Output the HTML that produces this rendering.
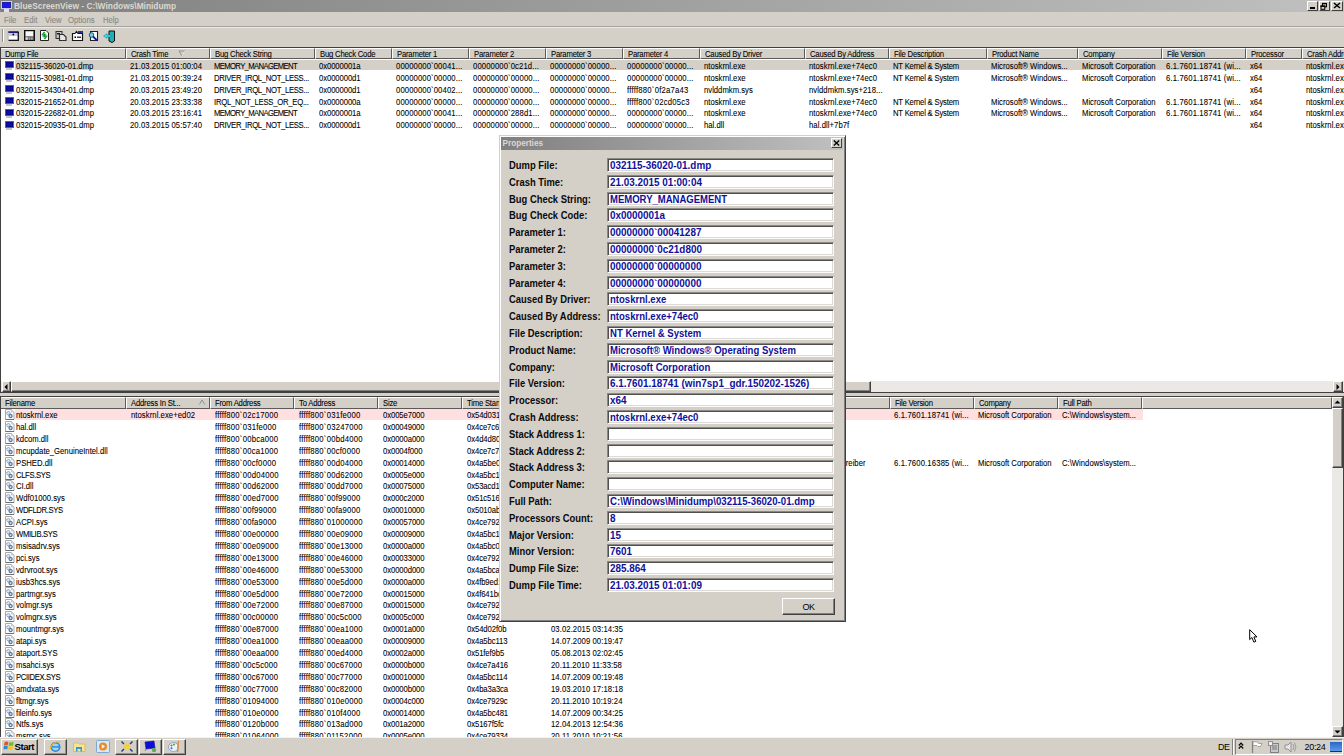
<!DOCTYPE html><html><head><meta charset="utf-8"><style>
html,body{margin:0;padding:0;}
body{width:1344px;height:756px;overflow:hidden;position:relative;background:#d4d0c8;font-family:"Liberation Sans",sans-serif;}
div{box-sizing:border-box;}
svg{display:block;}
.t{position:absolute;white-space:nowrap;font-size:8.3px;line-height:10px;color:#000;transform:scaleX(0.928);transform-origin:0 0;-webkit-text-stroke:0.08px #000;}
.n{transform:none;-webkit-text-stroke:0;}
</style></head><body>
<div style="position:absolute;left:0px;top:0px;width:1344px;height:12px;background:linear-gradient(to right,#808080,#c0c0c0);"></div>
<div style="position:absolute;left:1px;top:1px;width:11px;height:8px;background:#1818f0;border:1px solid #c8c8ff;box-shadow:inset 0 0 0 1px #2020a0;"></div>
<div style="position:absolute;left:4px;top:9px;width:5px;height:3px;background:#e0e0e0;"></div>
<div class="t" style="left:14px;top:0.8px;font-size:8.4px;font-weight:bold;color:#dcd8d0;line-height:10px;transform:none;-webkit-text-stroke:0;">BlueScreenView - C:\Windows\Minidump</div>
<div style="position:absolute;left:1307px;top:1px;width:11px;height:10px;background:#d4d0c8;border-top:1px solid #fff;border-left:1px solid #fff;border-right:1px solid #404040;border-bottom:1px solid #404040;"></div>
<div style="position:absolute;left:1319px;top:1px;width:11px;height:10px;background:#d4d0c8;border-top:1px solid #fff;border-left:1px solid #fff;border-right:1px solid #404040;border-bottom:1px solid #404040;"></div>
<div style="position:absolute;left:1331px;top:1px;width:12px;height:10px;background:#d4d0c8;border-top:1px solid #fff;border-left:1px solid #fff;border-right:1px solid #404040;border-bottom:1px solid #404040;"></div>
<div style="position:absolute;left:1310px;top:7px;width:5px;height:2px;background:#000;"></div>
<svg style="position:absolute;left:1319px;top:1px" width="11" height="10" viewBox="0 0 11 10"><path d="M3.5 5 V2.5 H7.5 V6 H6" fill="none" stroke="#000" stroke-width="1"/><path d="M3 2.6 H8" stroke="#000" stroke-width="1.4"/><rect x="2" y="5" width="3.8" height="3.3" fill="none" stroke="#000" stroke-width="1"/><path d="M1.5 5.2 H6.3" stroke="#000" stroke-width="1.4"/></svg>
<svg style="position:absolute;left:1333px;top:2px" width="8" height="7" viewBox="0 0 8 7"><path d="M1 1 L7 6 M7 1 L1 6" stroke="#000" stroke-width="1.5"/></svg>
<div class="t" style="left:4px;top:14.5px;color:#8a8884;-webkit-text-stroke:0.1px #8a8884;">File</div>
<div class="t" style="left:23.7px;top:14.5px;color:#8a8884;-webkit-text-stroke:0.1px #8a8884;">Edit</div>
<div class="t" style="left:45px;top:14.5px;color:#8a8884;-webkit-text-stroke:0.1px #8a8884;">View</div>
<div class="t" style="left:68.2px;top:14.5px;color:#8a8884;-webkit-text-stroke:0.1px #8a8884;">Options</div>
<div class="t" style="left:102.5px;top:14.5px;color:#8a8884;-webkit-text-stroke:0.1px #8a8884;">Help</div>
<div style="position:absolute;left:0px;top:26px;width:1344px;height:1px;background:#a4a29e;"></div>
<div style="position:absolute;left:0px;top:27px;width:1344px;height:1px;background:#ecebe7;"></div>
<div style="position:absolute;left:2px;top:29px;width:2px;height:13px;border-left:1px solid #909090;border-right:1px solid #fff;"></div>
<svg style="position:absolute;left:7px;top:30px" width="13" height="12" viewBox="0 0 13 12"><rect x="1" y="1" width="10.5" height="9.5" fill="#d8d8d8"/><rect x="1" y="1.2" width="10" height="1.8" fill="#1a1a80"/><rect x="1.5" y="3.2" width="9" height="2.5" fill="#c8c8d0"/><rect x="1.5" y="6" width="9" height="3.5" fill="#fff"/><circle cx="6.3" cy="4.5" r="0.9" fill="#000"/><path d="M1 1 V10" stroke="#b0b0b0" stroke-width="0.8"/><path d="M11.3 1.5 V10.4 H1.5" stroke="#151515" stroke-width="1.3" fill="none"/></svg>
<svg style="position:absolute;left:23px;top:29px" width="13" height="13" viewBox="0 0 13 13"><rect x="1.5" y="1.5" width="10" height="10" fill="#505050" stroke="#101010" stroke-width="1"/><rect x="2.6" y="2.3" width="7.6" height="5" fill="#f6f6f6"/><rect x="2.6" y="8.2" width="2.2" height="2.6" fill="#e0e0e0"/><rect x="5.5" y="8.2" width="1.6" height="2.6" fill="#a0a0a0"/><rect x="7.6" y="8.2" width="2.2" height="2.6" fill="#a0a0a0"/></svg>
<svg style="position:absolute;left:39px;top:29px" width="11" height="13" viewBox="0 0 11 13"><path d="M1.5 1.5 H7 L9.5 4 V11.5 H1.5 Z" fill="#fff" stroke="#202020" stroke-width="1"/><path d="M5.5 3 L3.5 5.5 L5 5.5 L5 8 M5.5 10 L7.5 7.5 L6 7.5 L6 5" stroke="#109010" stroke-width="1.3" fill="none"/><circle cx="5.5" cy="6.5" r="2" fill="none" stroke="#60b0b0" stroke-width="0.7"/></svg>
<svg style="position:absolute;left:55px;top:30px" width="13" height="12" viewBox="0 0 13 12"><rect x="1" y="1.5" width="6" height="7" fill="#c8c8c8" stroke="#303030" stroke-width="1"/><rect x="2" y="3" width="3" height="1.5" fill="#202020"/><path d="M4.5 4.5 H8.5 L11 7 V10.5 H4.5 Z" fill="#e8e8e8" stroke="#303030" stroke-width="1.2"/></svg>
<svg style="position:absolute;left:71px;top:30px" width="13" height="12" viewBox="0 0 13 12"><path d="M1.5 3.5 H4 L5.5 1.5 L7 3.5 H11.5 V10.5 H1.5 Z" fill="#fff" stroke="#151515" stroke-width="1.2"/><rect x="7" y="1" width="5" height="2" fill="#30308a"/><rect x="3.5" y="6.5" width="1.5" height="1.5" fill="#000"/><rect x="6" y="6.5" width="4" height="1.5" fill="#404040"/></svg>
<svg style="position:absolute;left:88px;top:30px" width="12" height="13" viewBox="0 0 12 13"><path d="M2.5 1.5 H9.5 V10.5 H2.5 Z" fill="#fff" stroke="#202020" stroke-width="1.1"/><circle cx="3.5" cy="5" r="2.3" fill="#70d0e0" stroke="#206080" stroke-width="1"/><path d="M5 6.5 L9 10.5" stroke="#1a1aa0" stroke-width="1.8"/></svg>
<svg style="position:absolute;left:103px;top:30px" width="13" height="13" viewBox="0 0 13 13"><path d="M6 1 L11.5 1 L11.5 11 L9 12.5 L6 11 Z" fill="#20b0b8" stroke="#101010" stroke-width="1"/><path d="M0.5 6 L4 3.5 V5 H8 V7 H4 V8.5 Z" fill="#40d8e8" stroke="#108090" stroke-width="0.5"/></svg>
<div style="position:absolute;left:0px;top:47px;width:1344px;height:346px;background:#fff;border-top:1px solid #404040;border-left:1px solid #404040;border-bottom:1px solid #404040;"></div>
<div style="position:absolute;left:1px;top:48px;width:1343px;height:11px;overflow:hidden;">
<div style="position:absolute;left:-1px;top:0px;width:126px;height:11px;background:#d4d0c8;border-right:1px solid #5a5a5a;border-bottom:1px solid #5a5a5a;border-left:1px solid #fff;border-top:1px solid #fff;"></div>
<div class="t" style="left:3.7px;top:1.3px;letter-spacing:-0.22px;">Dump File</div>
<div style="position:absolute;left:125px;top:0px;width:84px;height:11px;background:#d4d0c8;border-right:1px solid #5a5a5a;border-bottom:1px solid #5a5a5a;border-left:1px solid #fff;border-top:1px solid #fff;"></div>
<div class="t" style="left:129.7px;top:1.3px;letter-spacing:-0.22px;">Crash Time</div>
<div style="position:absolute;left:209px;top:0px;width:105px;height:11px;background:#d4d0c8;border-right:1px solid #5a5a5a;border-bottom:1px solid #5a5a5a;border-left:1px solid #fff;border-top:1px solid #fff;"></div>
<div class="t" style="left:213.7px;top:1.3px;letter-spacing:-0.22px;">Bug Check String</div>
<div style="position:absolute;left:314px;top:0px;width:77px;height:11px;background:#d4d0c8;border-right:1px solid #5a5a5a;border-bottom:1px solid #5a5a5a;border-left:1px solid #fff;border-top:1px solid #fff;"></div>
<div class="t" style="left:318.7px;top:1.3px;letter-spacing:-0.22px;">Bug Check Code</div>
<div style="position:absolute;left:391px;top:0px;width:77px;height:11px;background:#d4d0c8;border-right:1px solid #5a5a5a;border-bottom:1px solid #5a5a5a;border-left:1px solid #fff;border-top:1px solid #fff;"></div>
<div class="t" style="left:395.7px;top:1.3px;letter-spacing:-0.22px;">Parameter 1</div>
<div style="position:absolute;left:468px;top:0px;width:77px;height:11px;background:#d4d0c8;border-right:1px solid #5a5a5a;border-bottom:1px solid #5a5a5a;border-left:1px solid #fff;border-top:1px solid #fff;"></div>
<div class="t" style="left:472.7px;top:1.3px;letter-spacing:-0.22px;">Parameter 2</div>
<div style="position:absolute;left:545px;top:0px;width:77px;height:11px;background:#d4d0c8;border-right:1px solid #5a5a5a;border-bottom:1px solid #5a5a5a;border-left:1px solid #fff;border-top:1px solid #fff;"></div>
<div class="t" style="left:549.7px;top:1.3px;letter-spacing:-0.22px;">Parameter 3</div>
<div style="position:absolute;left:622px;top:0px;width:77px;height:11px;background:#d4d0c8;border-right:1px solid #5a5a5a;border-bottom:1px solid #5a5a5a;border-left:1px solid #fff;border-top:1px solid #fff;"></div>
<div class="t" style="left:626.7px;top:1.3px;letter-spacing:-0.22px;">Parameter 4</div>
<div style="position:absolute;left:699px;top:0px;width:105px;height:11px;background:#d4d0c8;border-right:1px solid #5a5a5a;border-bottom:1px solid #5a5a5a;border-left:1px solid #fff;border-top:1px solid #fff;"></div>
<div class="t" style="left:703.7px;top:1.3px;letter-spacing:-0.22px;">Caused By Driver</div>
<div style="position:absolute;left:804px;top:0px;width:84px;height:11px;background:#d4d0c8;border-right:1px solid #5a5a5a;border-bottom:1px solid #5a5a5a;border-left:1px solid #fff;border-top:1px solid #fff;"></div>
<div class="t" style="left:808.7px;top:1.3px;letter-spacing:-0.22px;">Caused By Address</div>
<div style="position:absolute;left:888px;top:0px;width:98px;height:11px;background:#d4d0c8;border-right:1px solid #5a5a5a;border-bottom:1px solid #5a5a5a;border-left:1px solid #fff;border-top:1px solid #fff;"></div>
<div class="t" style="left:892.7px;top:1.3px;letter-spacing:-0.22px;">File Description</div>
<div style="position:absolute;left:986px;top:0px;width:91px;height:11px;background:#d4d0c8;border-right:1px solid #5a5a5a;border-bottom:1px solid #5a5a5a;border-left:1px solid #fff;border-top:1px solid #fff;"></div>
<div class="t" style="left:990.7px;top:1.3px;letter-spacing:-0.22px;">Product Name</div>
<div style="position:absolute;left:1077px;top:0px;width:84px;height:11px;background:#d4d0c8;border-right:1px solid #5a5a5a;border-bottom:1px solid #5a5a5a;border-left:1px solid #fff;border-top:1px solid #fff;"></div>
<div class="t" style="left:1081.7px;top:1.3px;letter-spacing:-0.22px;">Company</div>
<div style="position:absolute;left:1161px;top:0px;width:84px;height:11px;background:#d4d0c8;border-right:1px solid #5a5a5a;border-bottom:1px solid #5a5a5a;border-left:1px solid #fff;border-top:1px solid #fff;"></div>
<div class="t" style="left:1165.7px;top:1.3px;letter-spacing:-0.22px;">File Version</div>
<div style="position:absolute;left:1245px;top:0px;width:56px;height:11px;background:#d4d0c8;border-right:1px solid #5a5a5a;border-bottom:1px solid #5a5a5a;border-left:1px solid #fff;border-top:1px solid #fff;"></div>
<div class="t" style="left:1249.7px;top:1.3px;letter-spacing:-0.22px;">Processor</div>
<div style="position:absolute;left:1301px;top:0px;width:98px;height:11px;background:#d4d0c8;border-right:1px solid #5a5a5a;border-bottom:1px solid #5a5a5a;border-left:1px solid #fff;border-top:1px solid #fff;"></div>
<div class="t" style="left:1305.7px;top:1.3px;letter-spacing:-0.22px;">Crash Address</div>
</div>
<svg style="position:absolute;left:178px;top:50px" width="8" height="7" viewBox="0 0 8 7"><path d="M1 1 L7 1 L4 6 Z" fill="none" stroke="#909090" stroke-width="1"/><path d="M4 6 L7 1" stroke="#fff" stroke-width="0.8"/></svg>
<div style="position:absolute;left:1px;top:59px;width:1343px;height:321px;overflow:hidden;">
<div style="position:absolute;left:14.3px;top:0.8px;width:1330px;height:10.6px;background:#d4d0c8;"></div>
<div style="position:absolute;left:3.5px;top:1.8px;width:9px;height:7.5px;background:#0c0cb0;border:1px solid #5a5ab8;box-shadow:inset 0 0 0 0.5px #000070;"></div>
<div style="position:absolute;left:5px;top:9.2px;width:6px;height:1.6px;background:#c4c4cc;"></div>
<div class="t" style="left:15px;top:1.8px;width:118.5px;overflow:hidden;">032115-36020-01.dmp</div>
<div class="t" style="left:129px;top:1.8px;letter-spacing:0.08px;width:86.2px;overflow:hidden;">21.03.2015 01:00:04</div>
<div class="t" style="left:213px;top:1.8px;letter-spacing:-0.7px;width:108.8px;overflow:hidden;">MEMORY_MANAGEMENT</div>
<div class="t" style="left:318px;top:1.8px;letter-spacing:-0.1px;width:78.7px;overflow:hidden;">0x0000001a</div>
<div class="t" style="left:395px;top:1.8px;letter-spacing:0.11px;width:78.7px;overflow:hidden;">00000000`00041...</div>
<div class="t" style="left:472px;top:1.8px;letter-spacing:0.11px;width:78.7px;overflow:hidden;">00000000`0c21d...</div>
<div class="t" style="left:549px;top:1.8px;letter-spacing:0.11px;width:78.7px;overflow:hidden;">00000000`00000...</div>
<div class="t" style="left:626px;top:1.8px;letter-spacing:0.11px;width:78.7px;overflow:hidden;">00000000`00000...</div>
<div class="t" style="left:703px;top:1.8px;width:108.8px;overflow:hidden;">ntoskrnl.exe</div>
<div class="t" style="left:808px;top:1.8px;letter-spacing:0.06px;width:86.2px;overflow:hidden;">ntoskrnl.exe+74ec0</div>
<div class="t" style="left:892px;top:1.8px;letter-spacing:-0.22px;width:101.3px;overflow:hidden;">NT Kernel &amp; System</div>
<div class="t" style="left:990px;top:1.8px;width:93.8px;overflow:hidden;">Microsoft&reg; Windows...</div>
<div class="t" style="left:1081px;top:1.8px;width:86.2px;overflow:hidden;">Microsoft Corporation</div>
<div class="t" style="left:1165px;top:1.8px;letter-spacing:0.15px;width:86.2px;overflow:hidden;">6.1.7601.18741 (wi...</div>
<div class="t" style="left:1249px;top:1.8px;letter-spacing:-0.13px;width:56.0px;overflow:hidden;">x64</div>
<div class="t" style="left:1305px;top:1.8px;letter-spacing:0.06px;width:101.3px;overflow:hidden;">ntoskrnl.exe+74ec0</div>
<div style="position:absolute;left:3.5px;top:13.8px;width:9px;height:7.5px;background:#0c0cb0;border:1px solid #5a5ab8;box-shadow:inset 0 0 0 0.5px #000070;"></div>
<div style="position:absolute;left:5px;top:21.2px;width:6px;height:1.6px;background:#c4c4cc;"></div>
<div class="t" style="left:15px;top:13.700000000000001px;width:118.5px;overflow:hidden;">032115-30981-01.dmp</div>
<div class="t" style="left:129px;top:13.700000000000001px;letter-spacing:0.08px;width:86.2px;overflow:hidden;">21.03.2015 00:39:24</div>
<div class="t" style="left:213px;top:13.700000000000001px;letter-spacing:-0.35px;width:108.8px;overflow:hidden;">DRIVER_IRQL_NOT_LESS...</div>
<div class="t" style="left:318px;top:13.700000000000001px;letter-spacing:-0.1px;width:78.7px;overflow:hidden;">0x000000d1</div>
<div class="t" style="left:395px;top:13.700000000000001px;letter-spacing:0.11px;width:78.7px;overflow:hidden;">00000000`00000...</div>
<div class="t" style="left:472px;top:13.700000000000001px;letter-spacing:0.11px;width:78.7px;overflow:hidden;">00000000`00000...</div>
<div class="t" style="left:549px;top:13.700000000000001px;letter-spacing:0.11px;width:78.7px;overflow:hidden;">00000000`00000...</div>
<div class="t" style="left:626px;top:13.700000000000001px;letter-spacing:0.11px;width:78.7px;overflow:hidden;">00000000`00000...</div>
<div class="t" style="left:703px;top:13.700000000000001px;width:108.8px;overflow:hidden;">ntoskrnl.exe</div>
<div class="t" style="left:808px;top:13.700000000000001px;letter-spacing:0.06px;width:86.2px;overflow:hidden;">ntoskrnl.exe+74ec0</div>
<div class="t" style="left:892px;top:13.700000000000001px;letter-spacing:-0.22px;width:101.3px;overflow:hidden;">NT Kernel &amp; System</div>
<div class="t" style="left:990px;top:13.700000000000001px;width:93.8px;overflow:hidden;">Microsoft&reg; Windows...</div>
<div class="t" style="left:1081px;top:13.700000000000001px;width:86.2px;overflow:hidden;">Microsoft Corporation</div>
<div class="t" style="left:1165px;top:13.700000000000001px;letter-spacing:0.15px;width:86.2px;overflow:hidden;">6.1.7601.18741 (wi...</div>
<div class="t" style="left:1249px;top:13.700000000000001px;letter-spacing:-0.13px;width:56.0px;overflow:hidden;">x64</div>
<div class="t" style="left:1305px;top:13.700000000000001px;letter-spacing:0.06px;width:101.3px;overflow:hidden;">ntoskrnl.exe+74ec0</div>
<div style="position:absolute;left:3.5px;top:25.8px;width:9px;height:7.5px;background:#0c0cb0;border:1px solid #5a5ab8;box-shadow:inset 0 0 0 0.5px #000070;"></div>
<div style="position:absolute;left:5px;top:33.2px;width:6px;height:1.6px;background:#c4c4cc;"></div>
<div class="t" style="left:15px;top:25.6px;width:118.5px;overflow:hidden;">032015-34304-01.dmp</div>
<div class="t" style="left:129px;top:25.6px;letter-spacing:0.08px;width:86.2px;overflow:hidden;">20.03.2015 23:49:20</div>
<div class="t" style="left:213px;top:25.6px;letter-spacing:-0.35px;width:108.8px;overflow:hidden;">DRIVER_IRQL_NOT_LESS...</div>
<div class="t" style="left:318px;top:25.6px;letter-spacing:-0.1px;width:78.7px;overflow:hidden;">0x000000d1</div>
<div class="t" style="left:395px;top:25.6px;letter-spacing:0.11px;width:78.7px;overflow:hidden;">00000000`00402...</div>
<div class="t" style="left:472px;top:25.6px;letter-spacing:0.11px;width:78.7px;overflow:hidden;">00000000`00000...</div>
<div class="t" style="left:549px;top:25.6px;letter-spacing:0.11px;width:78.7px;overflow:hidden;">00000000`00000...</div>
<div class="t" style="left:626px;top:25.6px;letter-spacing:0.25px;width:78.7px;overflow:hidden;">fffff880`0f2a7a43</div>
<div class="t" style="left:703px;top:25.6px;width:108.8px;overflow:hidden;">nvlddmkm.sys</div>
<div class="t" style="left:808px;top:25.6px;letter-spacing:0.06px;width:86.2px;overflow:hidden;">nvlddmkm.sys+218...</div>
<div class="t" style="left:1249px;top:25.6px;letter-spacing:-0.13px;width:56.0px;overflow:hidden;">x64</div>
<div class="t" style="left:1305px;top:25.6px;letter-spacing:0.06px;width:101.3px;overflow:hidden;">ntoskrnl.exe+74ec0</div>
<div style="position:absolute;left:3.5px;top:37.8px;width:9px;height:7.5px;background:#0c0cb0;border:1px solid #5a5ab8;box-shadow:inset 0 0 0 0.5px #000070;"></div>
<div style="position:absolute;left:5px;top:45.2px;width:6px;height:1.6px;background:#c4c4cc;"></div>
<div class="t" style="left:15px;top:37.5px;width:118.5px;overflow:hidden;">032015-21652-01.dmp</div>
<div class="t" style="left:129px;top:37.5px;letter-spacing:0.08px;width:86.2px;overflow:hidden;">20.03.2015 23:33:38</div>
<div class="t" style="left:213px;top:37.5px;letter-spacing:-0.27px;width:108.8px;overflow:hidden;">IRQL_NOT_LESS_OR_EQ...</div>
<div class="t" style="left:318px;top:37.5px;letter-spacing:-0.1px;width:78.7px;overflow:hidden;">0x0000000a</div>
<div class="t" style="left:395px;top:37.5px;letter-spacing:0.11px;width:78.7px;overflow:hidden;">00000000`00000...</div>
<div class="t" style="left:472px;top:37.5px;letter-spacing:0.11px;width:78.7px;overflow:hidden;">00000000`00000...</div>
<div class="t" style="left:549px;top:37.5px;letter-spacing:0.11px;width:78.7px;overflow:hidden;">00000000`00000...</div>
<div class="t" style="left:626px;top:37.5px;letter-spacing:0.25px;width:78.7px;overflow:hidden;">fffff800`02cd05c3</div>
<div class="t" style="left:703px;top:37.5px;width:108.8px;overflow:hidden;">ntoskrnl.exe</div>
<div class="t" style="left:808px;top:37.5px;letter-spacing:0.06px;width:86.2px;overflow:hidden;">ntoskrnl.exe+74ec0</div>
<div class="t" style="left:892px;top:37.5px;letter-spacing:-0.22px;width:101.3px;overflow:hidden;">NT Kernel &amp; System</div>
<div class="t" style="left:990px;top:37.5px;width:93.8px;overflow:hidden;">Microsoft&reg; Windows...</div>
<div class="t" style="left:1081px;top:37.5px;width:86.2px;overflow:hidden;">Microsoft Corporation</div>
<div class="t" style="left:1165px;top:37.5px;letter-spacing:0.15px;width:86.2px;overflow:hidden;">6.1.7601.18741 (wi...</div>
<div class="t" style="left:1249px;top:37.5px;letter-spacing:-0.13px;width:56.0px;overflow:hidden;">x64</div>
<div class="t" style="left:1305px;top:37.5px;letter-spacing:0.06px;width:101.3px;overflow:hidden;">ntoskrnl.exe+74ec0</div>
<div style="position:absolute;left:3.5px;top:49.8px;width:9px;height:7.5px;background:#0c0cb0;border:1px solid #5a5ab8;box-shadow:inset 0 0 0 0.5px #000070;"></div>
<div style="position:absolute;left:5px;top:57.2px;width:6px;height:1.6px;background:#c4c4cc;"></div>
<div class="t" style="left:15px;top:49.4px;width:118.5px;overflow:hidden;">032015-22682-01.dmp</div>
<div class="t" style="left:129px;top:49.4px;letter-spacing:0.08px;width:86.2px;overflow:hidden;">20.03.2015 23:16:41</div>
<div class="t" style="left:213px;top:49.4px;letter-spacing:-0.7px;width:108.8px;overflow:hidden;">MEMORY_MANAGEMENT</div>
<div class="t" style="left:318px;top:49.4px;letter-spacing:-0.1px;width:78.7px;overflow:hidden;">0x0000001a</div>
<div class="t" style="left:395px;top:49.4px;letter-spacing:0.11px;width:78.7px;overflow:hidden;">00000000`00041...</div>
<div class="t" style="left:472px;top:49.4px;letter-spacing:0.11px;width:78.7px;overflow:hidden;">00000000`288d1...</div>
<div class="t" style="left:549px;top:49.4px;letter-spacing:0.11px;width:78.7px;overflow:hidden;">00000000`00000...</div>
<div class="t" style="left:626px;top:49.4px;letter-spacing:0.11px;width:78.7px;overflow:hidden;">00000000`00000...</div>
<div class="t" style="left:703px;top:49.4px;width:108.8px;overflow:hidden;">ntoskrnl.exe</div>
<div class="t" style="left:808px;top:49.4px;letter-spacing:0.06px;width:86.2px;overflow:hidden;">ntoskrnl.exe+74ec0</div>
<div class="t" style="left:892px;top:49.4px;letter-spacing:-0.22px;width:101.3px;overflow:hidden;">NT Kernel &amp; System</div>
<div class="t" style="left:990px;top:49.4px;width:93.8px;overflow:hidden;">Microsoft&reg; Windows...</div>
<div class="t" style="left:1081px;top:49.4px;width:86.2px;overflow:hidden;">Microsoft Corporation</div>
<div class="t" style="left:1165px;top:49.4px;letter-spacing:0.15px;width:86.2px;overflow:hidden;">6.1.7601.18741 (wi...</div>
<div class="t" style="left:1249px;top:49.4px;letter-spacing:-0.13px;width:56.0px;overflow:hidden;">x64</div>
<div class="t" style="left:1305px;top:49.4px;letter-spacing:0.06px;width:101.3px;overflow:hidden;">ntoskrnl.exe+74ec0</div>
<div style="position:absolute;left:3.5px;top:61.8px;width:9px;height:7.5px;background:#0c0cb0;border:1px solid #5a5ab8;box-shadow:inset 0 0 0 0.5px #000070;"></div>
<div style="position:absolute;left:5px;top:69.2px;width:6px;height:1.6px;background:#c4c4cc;"></div>
<div class="t" style="left:15px;top:61.3px;width:118.5px;overflow:hidden;">032015-20935-01.dmp</div>
<div class="t" style="left:129px;top:61.3px;letter-spacing:0.08px;width:86.2px;overflow:hidden;">20.03.2015 05:57:40</div>
<div class="t" style="left:213px;top:61.3px;letter-spacing:-0.35px;width:108.8px;overflow:hidden;">DRIVER_IRQL_NOT_LESS...</div>
<div class="t" style="left:318px;top:61.3px;letter-spacing:-0.1px;width:78.7px;overflow:hidden;">0x000000d1</div>
<div class="t" style="left:395px;top:61.3px;letter-spacing:0.11px;width:78.7px;overflow:hidden;">00000000`00000...</div>
<div class="t" style="left:472px;top:61.3px;letter-spacing:0.11px;width:78.7px;overflow:hidden;">00000000`00000...</div>
<div class="t" style="left:549px;top:61.3px;letter-spacing:0.11px;width:78.7px;overflow:hidden;">00000000`00000...</div>
<div class="t" style="left:626px;top:61.3px;letter-spacing:0.11px;width:78.7px;overflow:hidden;">00000000`00000...</div>
<div class="t" style="left:703px;top:61.3px;width:108.8px;overflow:hidden;">hal.dll</div>
<div class="t" style="left:808px;top:61.3px;letter-spacing:0.06px;width:86.2px;overflow:hidden;">hal.dll+7b7f</div>
<div class="t" style="left:1249px;top:61.3px;letter-spacing:-0.13px;width:56.0px;overflow:hidden;">x64</div>
<div class="t" style="left:1305px;top:61.3px;letter-spacing:0.06px;width:101.3px;overflow:hidden;">ntoskrnl.exe+74ec0</div>
</div>
<div style="position:absolute;left:1px;top:381px;width:1343px;height:11px;background:#ebe9e5;"></div>
<div style="position:absolute;left:2px;top:381px;width:9px;height:11px;background:#d4d0c8;border-top:1px solid #fff;border-left:1px solid #fff;border-right:1px solid #404040;border-bottom:1px solid #404040;box-shadow:inset -1px -1px 0 #808080;"></div>
<svg style="position:absolute;left:4px;top:384px" width="4" height="6" viewBox="0 0 4 6"><path d="M3.5 0 L0.5 3 L3.5 6 Z" fill="#000"/></svg>
<div style="position:absolute;left:11px;top:381px;width:860px;height:11px;background:#d4d0c8;border-top:1px solid #fff;border-left:1px solid #fff;border-right:1px solid #404040;border-bottom:1px solid #404040;box-shadow:inset -1px -1px 0 #808080;"></div>
<div style="position:absolute;left:1333px;top:381px;width:10px;height:11px;background:#d4d0c8;border-top:1px solid #fff;border-left:1px solid #fff;border-right:1px solid #404040;border-bottom:1px solid #404040;box-shadow:inset -1px -1px 0 #808080;"></div>
<svg style="position:absolute;left:1336px;top:384px" width="4" height="6" viewBox="0 0 4 6"><path d="M0.5 0 L3.5 3 L0.5 6 Z" fill="#000"/></svg>
<div style="position:absolute;left:0px;top:396px;width:1344px;height:341px;background:#fff;border-top:1px solid #404040;border-left:1px solid #404040;"></div>
<div style="position:absolute;left:1px;top:397px;width:1331px;height:12px;overflow:hidden;">
<div style="position:absolute;left:-1px;top:0px;width:126px;height:12px;background:#d4d0c8;border-right:1px solid #5a5a5a;border-bottom:1px solid #5a5a5a;border-left:1px solid #fff;border-top:1px solid #fff;"></div>
<div class="t" style="left:3.7px;top:1.0px;letter-spacing:-0.22px;">Filename</div>
<div style="position:absolute;left:125px;top:0px;width:84px;height:12px;background:#d4d0c8;border-right:1px solid #5a5a5a;border-bottom:1px solid #5a5a5a;border-left:1px solid #fff;border-top:1px solid #fff;"></div>
<div class="t" style="left:129.7px;top:1.0px;letter-spacing:-0.22px;">Address In St...</div>
<div style="position:absolute;left:209px;top:0px;width:84px;height:12px;background:#d4d0c8;border-right:1px solid #5a5a5a;border-bottom:1px solid #5a5a5a;border-left:1px solid #fff;border-top:1px solid #fff;"></div>
<div class="t" style="left:213.7px;top:1.0px;letter-spacing:-0.22px;">From Address</div>
<div style="position:absolute;left:293px;top:0px;width:84px;height:12px;background:#d4d0c8;border-right:1px solid #5a5a5a;border-bottom:1px solid #5a5a5a;border-left:1px solid #fff;border-top:1px solid #fff;"></div>
<div class="t" style="left:297.7px;top:1.0px;letter-spacing:-0.22px;">To Address</div>
<div style="position:absolute;left:377px;top:0px;width:84px;height:12px;background:#d4d0c8;border-right:1px solid #5a5a5a;border-bottom:1px solid #5a5a5a;border-left:1px solid #fff;border-top:1px solid #fff;"></div>
<div class="t" style="left:381.7px;top:1.0px;letter-spacing:-0.22px;">Size</div>
<div style="position:absolute;left:461px;top:0px;width:84px;height:12px;background:#d4d0c8;border-right:1px solid #5a5a5a;border-bottom:1px solid #5a5a5a;border-left:1px solid #fff;border-top:1px solid #fff;"></div>
<div class="t" style="left:465.7px;top:1.0px;letter-spacing:-0.22px;">Time Stamp</div>
<div style="position:absolute;left:545px;top:0px;width:84px;height:12px;background:#d4d0c8;border-right:1px solid #5a5a5a;border-bottom:1px solid #5a5a5a;border-left:1px solid #fff;border-top:1px solid #fff;"></div>
<div class="t" style="left:549.7px;top:1.0px;letter-spacing:-0.22px;">Time String</div>
<div style="position:absolute;left:629px;top:0px;width:84px;height:12px;background:#d4d0c8;border-right:1px solid #5a5a5a;border-bottom:1px solid #5a5a5a;border-left:1px solid #fff;border-top:1px solid #fff;"></div>
<div class="t" style="left:633.7px;top:1.0px;letter-spacing:-0.22px;">Product Name</div>
<div style="position:absolute;left:713px;top:0px;width:84px;height:12px;background:#d4d0c8;border-right:1px solid #5a5a5a;border-bottom:1px solid #5a5a5a;border-left:1px solid #fff;border-top:1px solid #fff;"></div>
<div class="t" style="left:717.7px;top:1.0px;letter-spacing:-0.22px;">File Description</div>
<div style="position:absolute;left:797px;top:0px;width:92px;height:12px;background:#d4d0c8;border-right:1px solid #5a5a5a;border-bottom:1px solid #5a5a5a;border-left:1px solid #fff;border-top:1px solid #fff;"></div>
<div style="position:absolute;left:889px;top:0px;width:84px;height:12px;background:#d4d0c8;border-right:1px solid #5a5a5a;border-bottom:1px solid #5a5a5a;border-left:1px solid #fff;border-top:1px solid #fff;"></div>
<div class="t" style="left:893.7px;top:1.0px;letter-spacing:-0.22px;">File Version</div>
<div style="position:absolute;left:973px;top:0px;width:84px;height:12px;background:#d4d0c8;border-right:1px solid #5a5a5a;border-bottom:1px solid #5a5a5a;border-left:1px solid #fff;border-top:1px solid #fff;"></div>
<div class="t" style="left:977.7px;top:1.0px;letter-spacing:-0.22px;">Company</div>
<div style="position:absolute;left:1057px;top:0px;width:84px;height:12px;background:#d4d0c8;border-right:1px solid #5a5a5a;border-bottom:1px solid #5a5a5a;border-left:1px solid #fff;border-top:1px solid #fff;"></div>
<div class="t" style="left:1061.7px;top:1.0px;letter-spacing:-0.22px;">Full Path</div>
<div style="position:absolute;left:1141px;top:0px;width:190px;height:12px;background:#d4d0c8;border-right:1px solid #5a5a5a;border-bottom:1px solid #5a5a5a;border-left:1px solid #fff;border-top:1px solid #fff;"></div>
</div>
<svg style="position:absolute;left:198px;top:399px" width="8" height="7" viewBox="0 0 8 7"><path d="M4 1 L7 6 L1 6 Z" fill="none" stroke="#909090" stroke-width="1"/><path d="M1 6 L7 6" stroke="#fff" stroke-width="0.8"/></svg>
<div style="position:absolute;left:1px;top:409px;width:1331px;height:328px;overflow:hidden;">
<div style="position:absolute;left:14.3px;top:0.2px;width:1127.7px;height:11px;background:#ffdfdf;"></div>
<svg style="position:absolute;left:4px;top:0px" width="10" height="11" viewBox="0 0 10 11"><path d="M0.5 0.5 H6.5 L9 3 V10.5 H0.5 Z" fill="#fdfdfd" stroke="#a8a8a8" stroke-width="1"/><path d="M0.5 10.5 H9" stroke="#707070" stroke-width="1"/><path d="M6.5 0.5 V3 H9" fill="#e4e4e4" stroke="#c0c0c0" stroke-width="0.8"/><circle cx="3.4" cy="4.2" r="1.7" fill="#d8e8f4" stroke="#5878a0" stroke-width="1" stroke-dasharray="1 0.6"/><circle cx="5.6" cy="7.1" r="1.6" fill="#c8dcf0" stroke="#4a6a98" stroke-width="1.1"/></svg>
<div class="t" style="left:14.5px;top:1.0px;width:118.5px;overflow:hidden;">ntoskrnl.exe</div>
<div class="t" style="left:129.7px;top:1.0px;letter-spacing:0.06px;width:86.2px;overflow:hidden;">ntoskrnl.exe+ed02</div>
<div class="t" style="left:213.7px;top:1.0px;letter-spacing:0.25px;width:86.2px;overflow:hidden;">fffff800`02c17000</div>
<div class="t" style="left:297.7px;top:1.0px;letter-spacing:0.25px;width:86.2px;overflow:hidden;">fffff800`031fe000</div>
<div class="t" style="left:381.7px;top:1.0px;letter-spacing:-0.1px;width:86.2px;overflow:hidden;">0x005e7000</div>
<div class="t" style="left:465.7px;top:1.0px;letter-spacing:-0.1px;width:86.2px;overflow:hidden;">0x54d031ab</div>
<div class="t" style="left:549.7px;top:1.0px;letter-spacing:0.08px;width:86.2px;overflow:hidden;">03.02.2015 03:36:59</div>
<div class="t" style="left:893px;top:1.0px;letter-spacing:0.15px;width:86.2px;overflow:hidden;">6.1.7601.18741 (wi...</div>
<div class="t" style="left:977px;top:1.0px;width:86.2px;overflow:hidden;">Microsoft Corporation</div>
<div class="t" style="left:1061px;top:1.0px;width:86.2px;overflow:hidden;">C:\Windows\system...</div>
<svg style="position:absolute;left:4px;top:12px" width="10" height="11" viewBox="0 0 10 11"><path d="M0.5 0.5 H6.5 L9 3 V10.5 H0.5 Z" fill="#fdfdfd" stroke="#a8a8a8" stroke-width="1"/><path d="M0.5 10.5 H9" stroke="#707070" stroke-width="1"/><path d="M6.5 0.5 V3 H9" fill="#e4e4e4" stroke="#c0c0c0" stroke-width="0.8"/><circle cx="3.4" cy="4.2" r="1.7" fill="#d8e8f4" stroke="#5878a0" stroke-width="1" stroke-dasharray="1 0.6"/><circle cx="5.6" cy="7.1" r="1.6" fill="#c8dcf0" stroke="#4a6a98" stroke-width="1.1"/></svg>
<div class="t" style="left:14.5px;top:12.9px;width:118.5px;overflow:hidden;">hal.dll</div>
<div class="t" style="left:213.7px;top:12.9px;letter-spacing:0.25px;width:86.2px;overflow:hidden;">fffff800`031fe000</div>
<div class="t" style="left:297.7px;top:12.9px;letter-spacing:0.25px;width:86.2px;overflow:hidden;">fffff800`03247000</div>
<div class="t" style="left:381.7px;top:12.9px;letter-spacing:-0.1px;width:86.2px;overflow:hidden;">0x00049000</div>
<div class="t" style="left:465.7px;top:12.9px;letter-spacing:-0.1px;width:86.2px;overflow:hidden;">0x4ce7c669</div>
<svg style="position:absolute;left:4px;top:24px" width="10" height="11" viewBox="0 0 10 11"><path d="M0.5 0.5 H6.5 L9 3 V10.5 H0.5 Z" fill="#fdfdfd" stroke="#a8a8a8" stroke-width="1"/><path d="M0.5 10.5 H9" stroke="#707070" stroke-width="1"/><path d="M6.5 0.5 V3 H9" fill="#e4e4e4" stroke="#c0c0c0" stroke-width="0.8"/><circle cx="3.4" cy="4.2" r="1.7" fill="#d8e8f4" stroke="#5878a0" stroke-width="1" stroke-dasharray="1 0.6"/><circle cx="5.6" cy="7.1" r="1.6" fill="#c8dcf0" stroke="#4a6a98" stroke-width="1.1"/></svg>
<div class="t" style="left:14.5px;top:24.8px;width:118.5px;overflow:hidden;">kdcom.dll</div>
<div class="t" style="left:213.7px;top:24.8px;letter-spacing:0.25px;width:86.2px;overflow:hidden;">fffff800`00bca000</div>
<div class="t" style="left:297.7px;top:24.8px;letter-spacing:0.25px;width:86.2px;overflow:hidden;">fffff800`00bd4000</div>
<div class="t" style="left:381.7px;top:24.8px;letter-spacing:-0.1px;width:86.2px;overflow:hidden;">0x0000a000</div>
<div class="t" style="left:465.7px;top:24.8px;letter-spacing:-0.1px;width:86.2px;overflow:hidden;">0x4d4d8061</div>
<svg style="position:absolute;left:4px;top:36px" width="10" height="11" viewBox="0 0 10 11"><path d="M0.5 0.5 H6.5 L9 3 V10.5 H0.5 Z" fill="#fdfdfd" stroke="#a8a8a8" stroke-width="1"/><path d="M0.5 10.5 H9" stroke="#707070" stroke-width="1"/><path d="M6.5 0.5 V3 H9" fill="#e4e4e4" stroke="#c0c0c0" stroke-width="0.8"/><circle cx="3.4" cy="4.2" r="1.7" fill="#d8e8f4" stroke="#5878a0" stroke-width="1" stroke-dasharray="1 0.6"/><circle cx="5.6" cy="7.1" r="1.6" fill="#c8dcf0" stroke="#4a6a98" stroke-width="1.1"/></svg>
<div class="t" style="left:14.5px;top:36.7px;width:118.5px;overflow:hidden;">mcupdate_GenuineIntel.dll</div>
<div class="t" style="left:213.7px;top:36.7px;letter-spacing:0.25px;width:86.2px;overflow:hidden;">fffff880`00ca1000</div>
<div class="t" style="left:297.7px;top:36.7px;letter-spacing:0.25px;width:86.2px;overflow:hidden;">fffff880`00cf0000</div>
<div class="t" style="left:381.7px;top:36.7px;letter-spacing:-0.1px;width:86.2px;overflow:hidden;">0x0004f000</div>
<div class="t" style="left:465.7px;top:36.7px;letter-spacing:-0.1px;width:86.2px;overflow:hidden;">0x4ce7c737</div>
<svg style="position:absolute;left:4px;top:48px" width="10" height="11" viewBox="0 0 10 11"><path d="M0.5 0.5 H6.5 L9 3 V10.5 H0.5 Z" fill="#fdfdfd" stroke="#a8a8a8" stroke-width="1"/><path d="M0.5 10.5 H9" stroke="#707070" stroke-width="1"/><path d="M6.5 0.5 V3 H9" fill="#e4e4e4" stroke="#c0c0c0" stroke-width="0.8"/><circle cx="3.4" cy="4.2" r="1.7" fill="#d8e8f4" stroke="#5878a0" stroke-width="1" stroke-dasharray="1 0.6"/><circle cx="5.6" cy="7.1" r="1.6" fill="#c8dcf0" stroke="#4a6a98" stroke-width="1.1"/></svg>
<div class="t" style="left:14.5px;top:48.6px;width:118.5px;overflow:hidden;">PSHED.dll</div>
<div class="t" style="left:213.7px;top:48.6px;letter-spacing:0.25px;width:86.2px;overflow:hidden;">fffff880`00cf0000</div>
<div class="t" style="left:297.7px;top:48.6px;letter-spacing:0.25px;width:86.2px;overflow:hidden;">fffff880`00d04000</div>
<div class="t" style="left:381.7px;top:48.6px;letter-spacing:-0.1px;width:86.2px;overflow:hidden;">0x00014000</div>
<div class="t" style="left:465.7px;top:48.6px;letter-spacing:-0.1px;width:86.2px;overflow:hidden;">0x4a5be027</div>
<div class="t" style="left:780px;top:48.6px;width:90.5px;overflow:hidden;direction:rtl;text-align:left;">Microsoft Windows Treiber</div>
<div class="t" style="left:893px;top:48.6px;letter-spacing:0.15px;width:86.2px;overflow:hidden;">6.1.7600.16385 (wi...</div>
<div class="t" style="left:977px;top:48.6px;width:86.2px;overflow:hidden;">Microsoft Corporation</div>
<div class="t" style="left:1061px;top:48.6px;width:86.2px;overflow:hidden;">C:\Windows\system...</div>
<svg style="position:absolute;left:4px;top:60px" width="10" height="11" viewBox="0 0 10 11"><path d="M0.5 0.5 H6.5 L9 3 V10.5 H0.5 Z" fill="#fdfdfd" stroke="#a8a8a8" stroke-width="1"/><path d="M0.5 10.5 H9" stroke="#707070" stroke-width="1"/><path d="M6.5 0.5 V3 H9" fill="#e4e4e4" stroke="#c0c0c0" stroke-width="0.8"/><circle cx="3.4" cy="4.2" r="1.7" fill="#d8e8f4" stroke="#5878a0" stroke-width="1" stroke-dasharray="1 0.6"/><circle cx="5.6" cy="7.1" r="1.6" fill="#c8dcf0" stroke="#4a6a98" stroke-width="1.1"/></svg>
<div class="t" style="left:14.5px;top:60.5px;letter-spacing:-0.4px;width:118.5px;overflow:hidden;">CLFS.SYS</div>
<div class="t" style="left:213.7px;top:60.5px;letter-spacing:0.25px;width:86.2px;overflow:hidden;">fffff880`00d04000</div>
<div class="t" style="left:297.7px;top:60.5px;letter-spacing:0.25px;width:86.2px;overflow:hidden;">fffff880`00d62000</div>
<div class="t" style="left:381.7px;top:60.5px;letter-spacing:-0.1px;width:86.2px;overflow:hidden;">0x0005e000</div>
<div class="t" style="left:465.7px;top:60.5px;letter-spacing:-0.1px;width:86.2px;overflow:hidden;">0x4a5bc11f</div>
<svg style="position:absolute;left:4px;top:71px" width="10" height="11" viewBox="0 0 10 11"><path d="M0.5 0.5 H6.5 L9 3 V10.5 H0.5 Z" fill="#fdfdfd" stroke="#a8a8a8" stroke-width="1"/><path d="M0.5 10.5 H9" stroke="#707070" stroke-width="1"/><path d="M6.5 0.5 V3 H9" fill="#e4e4e4" stroke="#c0c0c0" stroke-width="0.8"/><circle cx="3.4" cy="4.2" r="1.7" fill="#d8e8f4" stroke="#5878a0" stroke-width="1" stroke-dasharray="1 0.6"/><circle cx="5.6" cy="7.1" r="1.6" fill="#c8dcf0" stroke="#4a6a98" stroke-width="1.1"/></svg>
<div class="t" style="left:14.5px;top:72.4px;width:118.5px;overflow:hidden;">CI.dll</div>
<div class="t" style="left:213.7px;top:72.4px;letter-spacing:0.25px;width:86.2px;overflow:hidden;">fffff880`00d62000</div>
<div class="t" style="left:297.7px;top:72.4px;letter-spacing:0.25px;width:86.2px;overflow:hidden;">fffff880`00dd7000</div>
<div class="t" style="left:381.7px;top:72.4px;letter-spacing:-0.1px;width:86.2px;overflow:hidden;">0x00075000</div>
<div class="t" style="left:465.7px;top:72.4px;letter-spacing:-0.1px;width:86.2px;overflow:hidden;">0x53acd1a2</div>
<svg style="position:absolute;left:4px;top:83px" width="10" height="11" viewBox="0 0 10 11"><path d="M0.5 0.5 H6.5 L9 3 V10.5 H0.5 Z" fill="#fdfdfd" stroke="#a8a8a8" stroke-width="1"/><path d="M0.5 10.5 H9" stroke="#707070" stroke-width="1"/><path d="M6.5 0.5 V3 H9" fill="#e4e4e4" stroke="#c0c0c0" stroke-width="0.8"/><circle cx="3.4" cy="4.2" r="1.7" fill="#d8e8f4" stroke="#5878a0" stroke-width="1" stroke-dasharray="1 0.6"/><circle cx="5.6" cy="7.1" r="1.6" fill="#c8dcf0" stroke="#4a6a98" stroke-width="1.1"/></svg>
<div class="t" style="left:14.5px;top:84.3px;width:118.5px;overflow:hidden;">Wdf01000.sys</div>
<div class="t" style="left:213.7px;top:84.3px;letter-spacing:0.25px;width:86.2px;overflow:hidden;">fffff880`00ed7000</div>
<div class="t" style="left:297.7px;top:84.3px;letter-spacing:0.25px;width:86.2px;overflow:hidden;">fffff880`00f99000</div>
<div class="t" style="left:381.7px;top:84.3px;letter-spacing:-0.1px;width:86.2px;overflow:hidden;">0x000c2000</div>
<div class="t" style="left:465.7px;top:84.3px;letter-spacing:-0.1px;width:86.2px;overflow:hidden;">0x51c51639</div>
<svg style="position:absolute;left:4px;top:95px" width="10" height="11" viewBox="0 0 10 11"><path d="M0.5 0.5 H6.5 L9 3 V10.5 H0.5 Z" fill="#fdfdfd" stroke="#a8a8a8" stroke-width="1"/><path d="M0.5 10.5 H9" stroke="#707070" stroke-width="1"/><path d="M6.5 0.5 V3 H9" fill="#e4e4e4" stroke="#c0c0c0" stroke-width="0.8"/><circle cx="3.4" cy="4.2" r="1.7" fill="#d8e8f4" stroke="#5878a0" stroke-width="1" stroke-dasharray="1 0.6"/><circle cx="5.6" cy="7.1" r="1.6" fill="#c8dcf0" stroke="#4a6a98" stroke-width="1.1"/></svg>
<div class="t" style="left:14.5px;top:96.2px;letter-spacing:-0.4px;width:118.5px;overflow:hidden;">WDFLDR.SYS</div>
<div class="t" style="left:213.7px;top:96.2px;letter-spacing:0.25px;width:86.2px;overflow:hidden;">fffff880`00f99000</div>
<div class="t" style="left:297.7px;top:96.2px;letter-spacing:0.25px;width:86.2px;overflow:hidden;">fffff880`00fa9000</div>
<div class="t" style="left:381.7px;top:96.2px;letter-spacing:-0.1px;width:86.2px;overflow:hidden;">0x00010000</div>
<div class="t" style="left:465.7px;top:96.2px;letter-spacing:-0.1px;width:86.2px;overflow:hidden;">0x5010ab70</div>
<svg style="position:absolute;left:4px;top:107px" width="10" height="11" viewBox="0 0 10 11"><path d="M0.5 0.5 H6.5 L9 3 V10.5 H0.5 Z" fill="#fdfdfd" stroke="#a8a8a8" stroke-width="1"/><path d="M0.5 10.5 H9" stroke="#707070" stroke-width="1"/><path d="M6.5 0.5 V3 H9" fill="#e4e4e4" stroke="#c0c0c0" stroke-width="0.8"/><circle cx="3.4" cy="4.2" r="1.7" fill="#d8e8f4" stroke="#5878a0" stroke-width="1" stroke-dasharray="1 0.6"/><circle cx="5.6" cy="7.1" r="1.6" fill="#c8dcf0" stroke="#4a6a98" stroke-width="1.1"/></svg>
<div class="t" style="left:14.5px;top:108.10000000000001px;width:118.5px;overflow:hidden;">ACPI.sys</div>
<div class="t" style="left:213.7px;top:108.10000000000001px;letter-spacing:0.25px;width:86.2px;overflow:hidden;">fffff880`00fa9000</div>
<div class="t" style="left:297.7px;top:108.10000000000001px;letter-spacing:0.25px;width:86.2px;overflow:hidden;">fffff880`01000000</div>
<div class="t" style="left:381.7px;top:108.10000000000001px;letter-spacing:-0.1px;width:86.2px;overflow:hidden;">0x00057000</div>
<div class="t" style="left:465.7px;top:108.10000000000001px;letter-spacing:-0.1px;width:86.2px;overflow:hidden;">0x4ce79294</div>
<svg style="position:absolute;left:4px;top:119px" width="10" height="11" viewBox="0 0 10 11"><path d="M0.5 0.5 H6.5 L9 3 V10.5 H0.5 Z" fill="#fdfdfd" stroke="#a8a8a8" stroke-width="1"/><path d="M0.5 10.5 H9" stroke="#707070" stroke-width="1"/><path d="M6.5 0.5 V3 H9" fill="#e4e4e4" stroke="#c0c0c0" stroke-width="0.8"/><circle cx="3.4" cy="4.2" r="1.7" fill="#d8e8f4" stroke="#5878a0" stroke-width="1" stroke-dasharray="1 0.6"/><circle cx="5.6" cy="7.1" r="1.6" fill="#c8dcf0" stroke="#4a6a98" stroke-width="1.1"/></svg>
<div class="t" style="left:14.5px;top:120.0px;letter-spacing:-0.4px;width:118.5px;overflow:hidden;">WMILIB.SYS</div>
<div class="t" style="left:213.7px;top:120.0px;letter-spacing:0.25px;width:86.2px;overflow:hidden;">fffff880`00e00000</div>
<div class="t" style="left:297.7px;top:120.0px;letter-spacing:0.25px;width:86.2px;overflow:hidden;">fffff880`00e09000</div>
<div class="t" style="left:381.7px;top:120.0px;letter-spacing:-0.1px;width:86.2px;overflow:hidden;">0x00009000</div>
<div class="t" style="left:465.7px;top:120.0px;letter-spacing:-0.1px;width:86.2px;overflow:hidden;">0x4a5bc117</div>
<svg style="position:absolute;left:4px;top:131px" width="10" height="11" viewBox="0 0 10 11"><path d="M0.5 0.5 H6.5 L9 3 V10.5 H0.5 Z" fill="#fdfdfd" stroke="#a8a8a8" stroke-width="1"/><path d="M0.5 10.5 H9" stroke="#707070" stroke-width="1"/><path d="M6.5 0.5 V3 H9" fill="#e4e4e4" stroke="#c0c0c0" stroke-width="0.8"/><circle cx="3.4" cy="4.2" r="1.7" fill="#d8e8f4" stroke="#5878a0" stroke-width="1" stroke-dasharray="1 0.6"/><circle cx="5.6" cy="7.1" r="1.6" fill="#c8dcf0" stroke="#4a6a98" stroke-width="1.1"/></svg>
<div class="t" style="left:14.5px;top:131.9px;width:118.5px;overflow:hidden;">msisadrv.sys</div>
<div class="t" style="left:213.7px;top:131.9px;letter-spacing:0.25px;width:86.2px;overflow:hidden;">fffff880`00e09000</div>
<div class="t" style="left:297.7px;top:131.9px;letter-spacing:0.25px;width:86.2px;overflow:hidden;">fffff880`00e13000</div>
<div class="t" style="left:381.7px;top:131.9px;letter-spacing:-0.1px;width:86.2px;overflow:hidden;">0x0000a000</div>
<div class="t" style="left:465.7px;top:131.9px;letter-spacing:-0.1px;width:86.2px;overflow:hidden;">0x4a5bc0fe</div>
<svg style="position:absolute;left:4px;top:143px" width="10" height="11" viewBox="0 0 10 11"><path d="M0.5 0.5 H6.5 L9 3 V10.5 H0.5 Z" fill="#fdfdfd" stroke="#a8a8a8" stroke-width="1"/><path d="M0.5 10.5 H9" stroke="#707070" stroke-width="1"/><path d="M6.5 0.5 V3 H9" fill="#e4e4e4" stroke="#c0c0c0" stroke-width="0.8"/><circle cx="3.4" cy="4.2" r="1.7" fill="#d8e8f4" stroke="#5878a0" stroke-width="1" stroke-dasharray="1 0.6"/><circle cx="5.6" cy="7.1" r="1.6" fill="#c8dcf0" stroke="#4a6a98" stroke-width="1.1"/></svg>
<div class="t" style="left:14.5px;top:143.8px;width:118.5px;overflow:hidden;">pci.sys</div>
<div class="t" style="left:213.7px;top:143.8px;letter-spacing:0.25px;width:86.2px;overflow:hidden;">fffff880`00e13000</div>
<div class="t" style="left:297.7px;top:143.8px;letter-spacing:0.25px;width:86.2px;overflow:hidden;">fffff880`00e46000</div>
<div class="t" style="left:381.7px;top:143.8px;letter-spacing:-0.1px;width:86.2px;overflow:hidden;">0x00033000</div>
<div class="t" style="left:465.7px;top:143.8px;letter-spacing:-0.1px;width:86.2px;overflow:hidden;">0x4ce7928f</div>
<svg style="position:absolute;left:4px;top:155px" width="10" height="11" viewBox="0 0 10 11"><path d="M0.5 0.5 H6.5 L9 3 V10.5 H0.5 Z" fill="#fdfdfd" stroke="#a8a8a8" stroke-width="1"/><path d="M0.5 10.5 H9" stroke="#707070" stroke-width="1"/><path d="M6.5 0.5 V3 H9" fill="#e4e4e4" stroke="#c0c0c0" stroke-width="0.8"/><circle cx="3.4" cy="4.2" r="1.7" fill="#d8e8f4" stroke="#5878a0" stroke-width="1" stroke-dasharray="1 0.6"/><circle cx="5.6" cy="7.1" r="1.6" fill="#c8dcf0" stroke="#4a6a98" stroke-width="1.1"/></svg>
<div class="t" style="left:14.5px;top:155.70000000000002px;width:118.5px;overflow:hidden;">vdrvroot.sys</div>
<div class="t" style="left:213.7px;top:155.70000000000002px;letter-spacing:0.25px;width:86.2px;overflow:hidden;">fffff880`00e46000</div>
<div class="t" style="left:297.7px;top:155.70000000000002px;letter-spacing:0.25px;width:86.2px;overflow:hidden;">fffff880`00e53000</div>
<div class="t" style="left:381.7px;top:155.70000000000002px;letter-spacing:-0.1px;width:86.2px;overflow:hidden;">0x0000d000</div>
<div class="t" style="left:465.7px;top:155.70000000000002px;letter-spacing:-0.1px;width:86.2px;overflow:hidden;">0x4a5bca04</div>
<svg style="position:absolute;left:4px;top:167px" width="10" height="11" viewBox="0 0 10 11"><path d="M0.5 0.5 H6.5 L9 3 V10.5 H0.5 Z" fill="#fdfdfd" stroke="#a8a8a8" stroke-width="1"/><path d="M0.5 10.5 H9" stroke="#707070" stroke-width="1"/><path d="M6.5 0.5 V3 H9" fill="#e4e4e4" stroke="#c0c0c0" stroke-width="0.8"/><circle cx="3.4" cy="4.2" r="1.7" fill="#d8e8f4" stroke="#5878a0" stroke-width="1" stroke-dasharray="1 0.6"/><circle cx="5.6" cy="7.1" r="1.6" fill="#c8dcf0" stroke="#4a6a98" stroke-width="1.1"/></svg>
<div class="t" style="left:14.5px;top:167.6px;width:118.5px;overflow:hidden;">iusb3hcs.sys</div>
<div class="t" style="left:213.7px;top:167.6px;letter-spacing:0.25px;width:86.2px;overflow:hidden;">fffff880`00e53000</div>
<div class="t" style="left:297.7px;top:167.6px;letter-spacing:0.25px;width:86.2px;overflow:hidden;">fffff880`00e5d000</div>
<div class="t" style="left:381.7px;top:167.6px;letter-spacing:-0.1px;width:86.2px;overflow:hidden;">0x0000a000</div>
<div class="t" style="left:465.7px;top:167.6px;letter-spacing:-0.1px;width:86.2px;overflow:hidden;">0x4fb9ed1b</div>
<svg style="position:absolute;left:4px;top:178px" width="10" height="11" viewBox="0 0 10 11"><path d="M0.5 0.5 H6.5 L9 3 V10.5 H0.5 Z" fill="#fdfdfd" stroke="#a8a8a8" stroke-width="1"/><path d="M0.5 10.5 H9" stroke="#707070" stroke-width="1"/><path d="M6.5 0.5 V3 H9" fill="#e4e4e4" stroke="#c0c0c0" stroke-width="0.8"/><circle cx="3.4" cy="4.2" r="1.7" fill="#d8e8f4" stroke="#5878a0" stroke-width="1" stroke-dasharray="1 0.6"/><circle cx="5.6" cy="7.1" r="1.6" fill="#c8dcf0" stroke="#4a6a98" stroke-width="1.1"/></svg>
<div class="t" style="left:14.5px;top:179.5px;width:118.5px;overflow:hidden;">partmgr.sys</div>
<div class="t" style="left:213.7px;top:179.5px;letter-spacing:0.25px;width:86.2px;overflow:hidden;">fffff880`00e5d000</div>
<div class="t" style="left:297.7px;top:179.5px;letter-spacing:0.25px;width:86.2px;overflow:hidden;">fffff880`00e72000</div>
<div class="t" style="left:381.7px;top:179.5px;letter-spacing:-0.1px;width:86.2px;overflow:hidden;">0x00015000</div>
<div class="t" style="left:465.7px;top:179.5px;letter-spacing:-0.1px;width:86.2px;overflow:hidden;">0x4f641bc1</div>
<svg style="position:absolute;left:4px;top:190px" width="10" height="11" viewBox="0 0 10 11"><path d="M0.5 0.5 H6.5 L9 3 V10.5 H0.5 Z" fill="#fdfdfd" stroke="#a8a8a8" stroke-width="1"/><path d="M0.5 10.5 H9" stroke="#707070" stroke-width="1"/><path d="M6.5 0.5 V3 H9" fill="#e4e4e4" stroke="#c0c0c0" stroke-width="0.8"/><circle cx="3.4" cy="4.2" r="1.7" fill="#d8e8f4" stroke="#5878a0" stroke-width="1" stroke-dasharray="1 0.6"/><circle cx="5.6" cy="7.1" r="1.6" fill="#c8dcf0" stroke="#4a6a98" stroke-width="1.1"/></svg>
<div class="t" style="left:14.5px;top:191.4px;width:118.5px;overflow:hidden;">volmgr.sys</div>
<div class="t" style="left:213.7px;top:191.4px;letter-spacing:0.25px;width:86.2px;overflow:hidden;">fffff880`00e72000</div>
<div class="t" style="left:297.7px;top:191.4px;letter-spacing:0.25px;width:86.2px;overflow:hidden;">fffff880`00e87000</div>
<div class="t" style="left:381.7px;top:191.4px;letter-spacing:-0.1px;width:86.2px;overflow:hidden;">0x00015000</div>
<div class="t" style="left:465.7px;top:191.4px;letter-spacing:-0.1px;width:86.2px;overflow:hidden;">0x4ce792a0</div>
<svg style="position:absolute;left:4px;top:202px" width="10" height="11" viewBox="0 0 10 11"><path d="M0.5 0.5 H6.5 L9 3 V10.5 H0.5 Z" fill="#fdfdfd" stroke="#a8a8a8" stroke-width="1"/><path d="M0.5 10.5 H9" stroke="#707070" stroke-width="1"/><path d="M6.5 0.5 V3 H9" fill="#e4e4e4" stroke="#c0c0c0" stroke-width="0.8"/><circle cx="3.4" cy="4.2" r="1.7" fill="#d8e8f4" stroke="#5878a0" stroke-width="1" stroke-dasharray="1 0.6"/><circle cx="5.6" cy="7.1" r="1.6" fill="#c8dcf0" stroke="#4a6a98" stroke-width="1.1"/></svg>
<div class="t" style="left:14.5px;top:203.3px;width:118.5px;overflow:hidden;">volmgrx.sys</div>
<div class="t" style="left:213.7px;top:203.3px;letter-spacing:0.25px;width:86.2px;overflow:hidden;">fffff880`00c00000</div>
<div class="t" style="left:297.7px;top:203.3px;letter-spacing:0.25px;width:86.2px;overflow:hidden;">fffff880`00c5c000</div>
<div class="t" style="left:381.7px;top:203.3px;letter-spacing:-0.1px;width:86.2px;overflow:hidden;">0x0005c000</div>
<div class="t" style="left:465.7px;top:203.3px;letter-spacing:-0.1px;width:86.2px;overflow:hidden;">0x4ce792b8</div>
<svg style="position:absolute;left:4px;top:214px" width="10" height="11" viewBox="0 0 10 11"><path d="M0.5 0.5 H6.5 L9 3 V10.5 H0.5 Z" fill="#fdfdfd" stroke="#a8a8a8" stroke-width="1"/><path d="M0.5 10.5 H9" stroke="#707070" stroke-width="1"/><path d="M6.5 0.5 V3 H9" fill="#e4e4e4" stroke="#c0c0c0" stroke-width="0.8"/><circle cx="3.4" cy="4.2" r="1.7" fill="#d8e8f4" stroke="#5878a0" stroke-width="1" stroke-dasharray="1 0.6"/><circle cx="5.6" cy="7.1" r="1.6" fill="#c8dcf0" stroke="#4a6a98" stroke-width="1.1"/></svg>
<div class="t" style="left:14.5px;top:215.20000000000002px;width:118.5px;overflow:hidden;">mountmgr.sys</div>
<div class="t" style="left:213.7px;top:215.20000000000002px;letter-spacing:0.25px;width:86.2px;overflow:hidden;">fffff880`00e87000</div>
<div class="t" style="left:297.7px;top:215.20000000000002px;letter-spacing:0.25px;width:86.2px;overflow:hidden;">fffff880`00ea1000</div>
<div class="t" style="left:381.7px;top:215.20000000000002px;letter-spacing:-0.1px;width:86.2px;overflow:hidden;">0x0001a000</div>
<div class="t" style="left:465.7px;top:215.20000000000002px;letter-spacing:-0.1px;width:86.2px;overflow:hidden;">0x54d02f0b</div>
<div class="t" style="left:549.7px;top:215.20000000000002px;letter-spacing:0.08px;width:86.2px;overflow:hidden;">03.02.2015 03:14:35</div>
<svg style="position:absolute;left:4px;top:226px" width="10" height="11" viewBox="0 0 10 11"><path d="M0.5 0.5 H6.5 L9 3 V10.5 H0.5 Z" fill="#fdfdfd" stroke="#a8a8a8" stroke-width="1"/><path d="M0.5 10.5 H9" stroke="#707070" stroke-width="1"/><path d="M6.5 0.5 V3 H9" fill="#e4e4e4" stroke="#c0c0c0" stroke-width="0.8"/><circle cx="3.4" cy="4.2" r="1.7" fill="#d8e8f4" stroke="#5878a0" stroke-width="1" stroke-dasharray="1 0.6"/><circle cx="5.6" cy="7.1" r="1.6" fill="#c8dcf0" stroke="#4a6a98" stroke-width="1.1"/></svg>
<div class="t" style="left:14.5px;top:227.1px;width:118.5px;overflow:hidden;">atapi.sys</div>
<div class="t" style="left:213.7px;top:227.1px;letter-spacing:0.25px;width:86.2px;overflow:hidden;">fffff880`00ea1000</div>
<div class="t" style="left:297.7px;top:227.1px;letter-spacing:0.25px;width:86.2px;overflow:hidden;">fffff880`00eaa000</div>
<div class="t" style="left:381.7px;top:227.1px;letter-spacing:-0.1px;width:86.2px;overflow:hidden;">0x00009000</div>
<div class="t" style="left:465.7px;top:227.1px;letter-spacing:-0.1px;width:86.2px;overflow:hidden;">0x4a5bc113</div>
<div class="t" style="left:549.7px;top:227.1px;letter-spacing:0.08px;width:86.2px;overflow:hidden;">14.07.2009 00:19:47</div>
<svg style="position:absolute;left:4px;top:238px" width="10" height="11" viewBox="0 0 10 11"><path d="M0.5 0.5 H6.5 L9 3 V10.5 H0.5 Z" fill="#fdfdfd" stroke="#a8a8a8" stroke-width="1"/><path d="M0.5 10.5 H9" stroke="#707070" stroke-width="1"/><path d="M6.5 0.5 V3 H9" fill="#e4e4e4" stroke="#c0c0c0" stroke-width="0.8"/><circle cx="3.4" cy="4.2" r="1.7" fill="#d8e8f4" stroke="#5878a0" stroke-width="1" stroke-dasharray="1 0.6"/><circle cx="5.6" cy="7.1" r="1.6" fill="#c8dcf0" stroke="#4a6a98" stroke-width="1.1"/></svg>
<div class="t" style="left:14.5px;top:239.0px;width:118.5px;overflow:hidden;">ataport.SYS</div>
<div class="t" style="left:213.7px;top:239.0px;letter-spacing:0.25px;width:86.2px;overflow:hidden;">fffff880`00eaa000</div>
<div class="t" style="left:297.7px;top:239.0px;letter-spacing:0.25px;width:86.2px;overflow:hidden;">fffff880`00ed4000</div>
<div class="t" style="left:381.7px;top:239.0px;letter-spacing:-0.1px;width:86.2px;overflow:hidden;">0x0002a000</div>
<div class="t" style="left:465.7px;top:239.0px;letter-spacing:-0.1px;width:86.2px;overflow:hidden;">0x51fef9b5</div>
<div class="t" style="left:549.7px;top:239.0px;letter-spacing:0.08px;width:86.2px;overflow:hidden;">05.08.2013 02:02:45</div>
<svg style="position:absolute;left:4px;top:250px" width="10" height="11" viewBox="0 0 10 11"><path d="M0.5 0.5 H6.5 L9 3 V10.5 H0.5 Z" fill="#fdfdfd" stroke="#a8a8a8" stroke-width="1"/><path d="M0.5 10.5 H9" stroke="#707070" stroke-width="1"/><path d="M6.5 0.5 V3 H9" fill="#e4e4e4" stroke="#c0c0c0" stroke-width="0.8"/><circle cx="3.4" cy="4.2" r="1.7" fill="#d8e8f4" stroke="#5878a0" stroke-width="1" stroke-dasharray="1 0.6"/><circle cx="5.6" cy="7.1" r="1.6" fill="#c8dcf0" stroke="#4a6a98" stroke-width="1.1"/></svg>
<div class="t" style="left:14.5px;top:250.9px;width:118.5px;overflow:hidden;">msahci.sys</div>
<div class="t" style="left:213.7px;top:250.9px;letter-spacing:0.25px;width:86.2px;overflow:hidden;">fffff880`00c5c000</div>
<div class="t" style="left:297.7px;top:250.9px;letter-spacing:0.25px;width:86.2px;overflow:hidden;">fffff880`00c67000</div>
<div class="t" style="left:381.7px;top:250.9px;letter-spacing:-0.1px;width:86.2px;overflow:hidden;">0x0000b000</div>
<div class="t" style="left:465.7px;top:250.9px;letter-spacing:-0.1px;width:86.2px;overflow:hidden;">0x4ce7a416</div>
<div class="t" style="left:549.7px;top:250.9px;letter-spacing:0.08px;width:86.2px;overflow:hidden;">20.11.2010 11:33:58</div>
<svg style="position:absolute;left:4px;top:262px" width="10" height="11" viewBox="0 0 10 11"><path d="M0.5 0.5 H6.5 L9 3 V10.5 H0.5 Z" fill="#fdfdfd" stroke="#a8a8a8" stroke-width="1"/><path d="M0.5 10.5 H9" stroke="#707070" stroke-width="1"/><path d="M6.5 0.5 V3 H9" fill="#e4e4e4" stroke="#c0c0c0" stroke-width="0.8"/><circle cx="3.4" cy="4.2" r="1.7" fill="#d8e8f4" stroke="#5878a0" stroke-width="1" stroke-dasharray="1 0.6"/><circle cx="5.6" cy="7.1" r="1.6" fill="#c8dcf0" stroke="#4a6a98" stroke-width="1.1"/></svg>
<div class="t" style="left:14.5px;top:262.8px;letter-spacing:-0.4px;width:118.5px;overflow:hidden;">PCIIDEX.SYS</div>
<div class="t" style="left:213.7px;top:262.8px;letter-spacing:0.25px;width:86.2px;overflow:hidden;">fffff880`00c67000</div>
<div class="t" style="left:297.7px;top:262.8px;letter-spacing:0.25px;width:86.2px;overflow:hidden;">fffff880`00c77000</div>
<div class="t" style="left:381.7px;top:262.8px;letter-spacing:-0.1px;width:86.2px;overflow:hidden;">0x00010000</div>
<div class="t" style="left:465.7px;top:262.8px;letter-spacing:-0.1px;width:86.2px;overflow:hidden;">0x4a5bc114</div>
<div class="t" style="left:549.7px;top:262.8px;letter-spacing:0.08px;width:86.2px;overflow:hidden;">14.07.2009 00:19:48</div>
<svg style="position:absolute;left:4px;top:274px" width="10" height="11" viewBox="0 0 10 11"><path d="M0.5 0.5 H6.5 L9 3 V10.5 H0.5 Z" fill="#fdfdfd" stroke="#a8a8a8" stroke-width="1"/><path d="M0.5 10.5 H9" stroke="#707070" stroke-width="1"/><path d="M6.5 0.5 V3 H9" fill="#e4e4e4" stroke="#c0c0c0" stroke-width="0.8"/><circle cx="3.4" cy="4.2" r="1.7" fill="#d8e8f4" stroke="#5878a0" stroke-width="1" stroke-dasharray="1 0.6"/><circle cx="5.6" cy="7.1" r="1.6" fill="#c8dcf0" stroke="#4a6a98" stroke-width="1.1"/></svg>
<div class="t" style="left:14.5px;top:274.7px;width:118.5px;overflow:hidden;">amdxata.sys</div>
<div class="t" style="left:213.7px;top:274.7px;letter-spacing:0.25px;width:86.2px;overflow:hidden;">fffff880`00c77000</div>
<div class="t" style="left:297.7px;top:274.7px;letter-spacing:0.25px;width:86.2px;overflow:hidden;">fffff880`00c82000</div>
<div class="t" style="left:381.7px;top:274.7px;letter-spacing:-0.1px;width:86.2px;overflow:hidden;">0x0000b000</div>
<div class="t" style="left:465.7px;top:274.7px;letter-spacing:-0.1px;width:86.2px;overflow:hidden;">0x4ba3a3ca</div>
<div class="t" style="left:549.7px;top:274.7px;letter-spacing:0.08px;width:86.2px;overflow:hidden;">19.03.2010 17:18:18</div>
<svg style="position:absolute;left:4px;top:286px" width="10" height="11" viewBox="0 0 10 11"><path d="M0.5 0.5 H6.5 L9 3 V10.5 H0.5 Z" fill="#fdfdfd" stroke="#a8a8a8" stroke-width="1"/><path d="M0.5 10.5 H9" stroke="#707070" stroke-width="1"/><path d="M6.5 0.5 V3 H9" fill="#e4e4e4" stroke="#c0c0c0" stroke-width="0.8"/><circle cx="3.4" cy="4.2" r="1.7" fill="#d8e8f4" stroke="#5878a0" stroke-width="1" stroke-dasharray="1 0.6"/><circle cx="5.6" cy="7.1" r="1.6" fill="#c8dcf0" stroke="#4a6a98" stroke-width="1.1"/></svg>
<div class="t" style="left:14.5px;top:286.6px;width:118.5px;overflow:hidden;">fltmgr.sys</div>
<div class="t" style="left:213.7px;top:286.6px;letter-spacing:0.25px;width:86.2px;overflow:hidden;">fffff880`01094000</div>
<div class="t" style="left:297.7px;top:286.6px;letter-spacing:0.25px;width:86.2px;overflow:hidden;">fffff880`010e0000</div>
<div class="t" style="left:381.7px;top:286.6px;letter-spacing:-0.1px;width:86.2px;overflow:hidden;">0x0004c000</div>
<div class="t" style="left:465.7px;top:286.6px;letter-spacing:-0.1px;width:86.2px;overflow:hidden;">0x4ce7929c</div>
<div class="t" style="left:549.7px;top:286.6px;letter-spacing:0.08px;width:86.2px;overflow:hidden;">20.11.2010 10:19:24</div>
<svg style="position:absolute;left:4px;top:298px" width="10" height="11" viewBox="0 0 10 11"><path d="M0.5 0.5 H6.5 L9 3 V10.5 H0.5 Z" fill="#fdfdfd" stroke="#a8a8a8" stroke-width="1"/><path d="M0.5 10.5 H9" stroke="#707070" stroke-width="1"/><path d="M6.5 0.5 V3 H9" fill="#e4e4e4" stroke="#c0c0c0" stroke-width="0.8"/><circle cx="3.4" cy="4.2" r="1.7" fill="#d8e8f4" stroke="#5878a0" stroke-width="1" stroke-dasharray="1 0.6"/><circle cx="5.6" cy="7.1" r="1.6" fill="#c8dcf0" stroke="#4a6a98" stroke-width="1.1"/></svg>
<div class="t" style="left:14.5px;top:298.5px;width:118.5px;overflow:hidden;">fileinfo.sys</div>
<div class="t" style="left:213.7px;top:298.5px;letter-spacing:0.25px;width:86.2px;overflow:hidden;">fffff880`010e0000</div>
<div class="t" style="left:297.7px;top:298.5px;letter-spacing:0.25px;width:86.2px;overflow:hidden;">fffff880`010f4000</div>
<div class="t" style="left:381.7px;top:298.5px;letter-spacing:-0.1px;width:86.2px;overflow:hidden;">0x00014000</div>
<div class="t" style="left:465.7px;top:298.5px;letter-spacing:-0.1px;width:86.2px;overflow:hidden;">0x4a5bc481</div>
<div class="t" style="left:549.7px;top:298.5px;letter-spacing:0.08px;width:86.2px;overflow:hidden;">14.07.2009 00:34:25</div>
<svg style="position:absolute;left:4px;top:309px" width="10" height="11" viewBox="0 0 10 11"><path d="M0.5 0.5 H6.5 L9 3 V10.5 H0.5 Z" fill="#fdfdfd" stroke="#a8a8a8" stroke-width="1"/><path d="M0.5 10.5 H9" stroke="#707070" stroke-width="1"/><path d="M6.5 0.5 V3 H9" fill="#e4e4e4" stroke="#c0c0c0" stroke-width="0.8"/><circle cx="3.4" cy="4.2" r="1.7" fill="#d8e8f4" stroke="#5878a0" stroke-width="1" stroke-dasharray="1 0.6"/><circle cx="5.6" cy="7.1" r="1.6" fill="#c8dcf0" stroke="#4a6a98" stroke-width="1.1"/></svg>
<div class="t" style="left:14.5px;top:310.40000000000003px;width:118.5px;overflow:hidden;">Ntfs.sys</div>
<div class="t" style="left:213.7px;top:310.40000000000003px;letter-spacing:0.25px;width:86.2px;overflow:hidden;">fffff880`0120b000</div>
<div class="t" style="left:297.7px;top:310.40000000000003px;letter-spacing:0.25px;width:86.2px;overflow:hidden;">fffff880`013ad000</div>
<div class="t" style="left:381.7px;top:310.40000000000003px;letter-spacing:-0.1px;width:86.2px;overflow:hidden;">0x001a2000</div>
<div class="t" style="left:465.7px;top:310.40000000000003px;letter-spacing:-0.1px;width:86.2px;overflow:hidden;">0x5167f5fc</div>
<div class="t" style="left:549.7px;top:310.40000000000003px;letter-spacing:0.08px;width:86.2px;overflow:hidden;">12.04.2013 12:54:36</div>
<svg style="position:absolute;left:4px;top:321px" width="10" height="11" viewBox="0 0 10 11"><path d="M0.5 0.5 H6.5 L9 3 V10.5 H0.5 Z" fill="#fdfdfd" stroke="#a8a8a8" stroke-width="1"/><path d="M0.5 10.5 H9" stroke="#707070" stroke-width="1"/><path d="M6.5 0.5 V3 H9" fill="#e4e4e4" stroke="#c0c0c0" stroke-width="0.8"/><circle cx="3.4" cy="4.2" r="1.7" fill="#d8e8f4" stroke="#5878a0" stroke-width="1" stroke-dasharray="1 0.6"/><circle cx="5.6" cy="7.1" r="1.6" fill="#c8dcf0" stroke="#4a6a98" stroke-width="1.1"/></svg>
<div class="t" style="left:14.5px;top:322.3px;width:118.5px;overflow:hidden;">msrpc.sys</div>
<div class="t" style="left:213.7px;top:322.3px;letter-spacing:0.25px;width:86.2px;overflow:hidden;">fffff880`01064000</div>
<div class="t" style="left:297.7px;top:322.3px;letter-spacing:0.25px;width:86.2px;overflow:hidden;">fffff880`01152000</div>
<div class="t" style="left:381.7px;top:322.3px;letter-spacing:-0.1px;width:86.2px;overflow:hidden;">0x0005e000</div>
<div class="t" style="left:465.7px;top:322.3px;letter-spacing:-0.1px;width:86.2px;overflow:hidden;">0x4ce79334</div>
<div class="t" style="left:549.7px;top:322.3px;letter-spacing:0.08px;width:86.2px;overflow:hidden;">20.11.2010 10:21:56</div>
</div>
<div style="position:absolute;left:1332px;top:397px;width:11px;height:340px;background:#ebe9e5;"></div>
<div style="position:absolute;left:1332px;top:397px;width:11px;height:11px;background:#d4d0c8;border-top:1px solid #fff;border-left:1px solid #fff;border-right:1px solid #404040;border-bottom:1px solid #404040;box-shadow:inset -1px -1px 0 #808080;"></div>
<svg style="position:absolute;left:1334px;top:400px" width="7" height="4" viewBox="0 0 7 4"><path d="M0.5 3.5 L3.5 0.5 L6.5 3.5 Z" fill="#000"/></svg>
<div style="position:absolute;left:1332px;top:408px;width:11px;height:60px;background:#d4d0c8;border-top:1px solid #fff;border-left:1px solid #fff;border-right:1px solid #404040;border-bottom:1px solid #404040;box-shadow:inset -1px -1px 0 #808080;"></div>
<div style="position:absolute;left:1332px;top:726px;width:11px;height:11px;background:#d4d0c8;border-top:1px solid #fff;border-left:1px solid #fff;border-right:1px solid #404040;border-bottom:1px solid #404040;box-shadow:inset -1px -1px 0 #808080;"></div>
<svg style="position:absolute;left:1334px;top:730px" width="7" height="4" viewBox="0 0 7 4"><path d="M0.5 0.5 L3.5 3.5 L6.5 0.5 Z" fill="#000"/></svg>
<div style="position:absolute;left:1343px;top:396px;width:1px;height:341px;background:#404040;"></div>
<div style="position:absolute;left:0px;top:737px;width:1344px;height:19px;background:#d4d0c8;border-top:1px solid #f4f3f0;"></div>
<div style="position:absolute;left:1px;top:739px;width:37px;height:16px;background:#d4d0c8;border-top:1px solid #fff;border-left:1px solid #fff;border-right:1px solid #404040;border-bottom:1px solid #404040;box-shadow:inset -1px -1px 0 #909090;"></div>
<svg style="position:absolute;left:3px;top:740px" width="11" height="11" viewBox="0 0 11 11"><g><path d="M1.5 2.5 Q3 1 5.3 2 L4.8 5.2 Q3 4.3 1 5.5 Z" fill="#e8501c"/><path d="M6 2.2 Q8 3 10.5 1.8 L10 5.4 Q8 6.2 5.6 5.5 Z" fill="#70b830"/><path d="M1 6 Q3 5 4.8 6 L4.3 9.4 Q2.5 8.4 0.5 9.5 Z" fill="#2a8ad8"/><path d="M5.5 6.1 Q8 6.8 10 6 L9.5 9.5 Q7.5 10.5 5 9.4 Z" fill="#f8c820"/></g></svg>
<div class="t n" style="left:14.5px;top:741px;font-size:9.6px;font-weight:bold;line-height:11px;letter-spacing:-0.45px;">Start</div>
<div style="position:absolute;left:44px;top:739px;width:23px;height:16px;background:#d4d0c8;border-top:1px solid #fff;border-left:1px solid #fff;border-right:1px solid #404040;border-bottom:1px solid #404040;box-shadow:inset -1px -1px 0 #909090;"></div>
<svg style="position:absolute;left:49px;top:740px" width="13" height="13" viewBox="0 0 13 13"><circle cx="6.5" cy="7" r="4.2" fill="#9ed4f4" stroke="#2a88d8" stroke-width="1.6"/><rect x="3" y="6.2" width="7" height="1.4" fill="#2a88d8"/><path d="M1.5 9 Q2 2 11.5 1.5" fill="none" stroke="#f0b020" stroke-width="1.2"/></svg>
<svg style="position:absolute;left:73px;top:741px" width="13" height="11" viewBox="0 0 13 11"><path d="M0.5 2 H5 L6 3 H12 V10.5 H0.5 Z" fill="#f6e49a" stroke="#d8b850" stroke-width="0.8"/><path d="M3 6 H9 V10.5 H7.5 V8 H4.5 V10.5 H3 Z" fill="#3a98d0"/></svg>
<svg style="position:absolute;left:96px;top:740px" width="14" height="13" viewBox="0 0 14 13"><rect x="0.5" y="0.5" width="13" height="12" rx="1" fill="#d8e8f4" stroke="#7aa8d0" stroke-width="1"/><circle cx="7" cy="6.5" r="4" fill="#f08a1c"/><path d="M5.8 4.3 L9 6.5 L5.8 8.7 Z" fill="#fff"/></svg>
<div style="position:absolute;left:115px;top:739px;width:23px;height:16px;background:#d4d0c8;border-top:1px solid #fff;border-left:1px solid #fff;border-right:1px solid #404040;border-bottom:1px solid #404040;box-shadow:inset -1px -1px 0 #909090;"></div>
<svg style="position:absolute;left:120px;top:740px" width="14" height="13" viewBox="0 0 14 13"><circle cx="7" cy="6.5" r="3" fill="#f4d040"/><path d="M1.5 1.5 L4 4 M12.5 1.5 L10 4 M1.5 11.5 L4 9 M12.5 11.5 L10 9" stroke="#1a3a78" stroke-width="1.4"/></svg>
<div style="position:absolute;left:139px;top:739px;width:23px;height:16px;background:#d4d0c8;border-top:1px solid #fff;border-left:1px solid #fff;border-right:1px solid #404040;border-bottom:1px solid #404040;box-shadow:inset -1px -1px 0 #909090;"></div>
<svg style="position:absolute;left:144px;top:740px" width="14" height="13" viewBox="0 0 14 13"><path d="M1 2 L10 1 L11 8 L2 9 Z" fill="#0c0ce0" stroke="#101080" stroke-width="0.6"/><circle cx="10" cy="10" r="2.2" fill="#60a860"/><path d="M2 9 L1 11" stroke="#888" stroke-width="1"/></svg>
<div style="position:absolute;left:163px;top:739px;width:23px;height:16px;background:#d4d0c8;border-top:1px solid #fff;border-left:1px solid #fff;border-right:1px solid #404040;border-bottom:1px solid #404040;box-shadow:inset -1px -1px 0 #909090;"></div>
<svg style="position:absolute;left:167px;top:740px" width="15" height="13" viewBox="0 0 15 13"><ellipse cx="6.5" cy="7" rx="5" ry="4.5" fill="#eef2f6" stroke="#8aa8c8" stroke-width="1"/><circle cx="4.5" cy="5.5" r="1" fill="#e04040"/><circle cx="7" cy="4.5" r="1" fill="#40a040"/><circle cx="4.5" cy="8.2" r="1" fill="#4060e0"/><path d="M11.5 1 L10.5 12" stroke="#e09040" stroke-width="1.6"/></svg>
<div class="t n" style="left:1218px;top:741.5px;font-size:9px;line-height:11px;letter-spacing:-0.6px;">DE</div>
<div style="position:absolute;left:1232px;top:739px;width:2px;height:16px;border-left:1px solid #808080;border-right:1px solid #fff;"></div>
<div style="position:absolute;left:1235px;top:739px;width:108px;height:16px;border-top:1px solid #808080;border-left:1px solid #808080;border-right:1px solid #fff;border-bottom:1px solid #fff;"></div>
<svg style="position:absolute;left:1238px;top:742px" width="6" height="7" viewBox="0 0 6 7"><path d="M0.8 3.5 L3 1.2 L5.2 3.5 M0.8 6.5 L3 4.2 L5.2 6.5" fill="none" stroke="#000" stroke-width="1.2"/></svg>
<svg style="position:absolute;left:1251px;top:740px" width="12" height="13" viewBox="0 0 12 13"><path d="M1.5 1 L1.5 13" stroke="#808080" stroke-width="1.3"/><path d="M2 1.8 H6.5 L7.5 3.5 H11 L9.5 6.5 H7 L6 5.5 H2 Z" fill="#fff" stroke="#909090" stroke-width="0.8"/></svg>
<svg style="position:absolute;left:1267px;top:740px" width="13" height="14" viewBox="0 0 13 14"><rect x="3.5" y="3.5" width="8" height="9" fill="#c8c8c8" stroke="#808080"/><rect x="5" y="5" width="5" height="5" fill="#a0a0a0"/><rect x="1.5" y="1.5" width="4" height="4" fill="#eee" stroke="#909090"/></svg>
<svg style="position:absolute;left:1284px;top:741px" width="13" height="12" viewBox="0 0 13 12"><path d="M1 4 L4 4 L7 1 L7 11 L4 8 L1 8 Z" fill="#e8e8e8" stroke="#909090"/><path d="M9 3 Q11 6 9 9 M10.5 1.5 Q13.5 6 10.5 10.5" fill="none" stroke="#a0a0a0"/></svg>
<div class="t n" style="left:1304.5px;top:741.5px;font-size:9px;line-height:11px;letter-spacing:-0.3px;">20:24</div>
<div style="position:absolute;left:1330px;top:742px;width:12px;height:10px;background:linear-gradient(#2a68c8,#5a98e8);border-bottom:1px solid #183070;"></div>
<div style="position:absolute;left:499px;top:135px;width:347px;height:487px;background:#d4d0c8;border-top:1px solid #d4d0c8;border-left:1px solid #d4d0c8;border-right:1px solid #404040;border-bottom:1px solid #404040;box-shadow:inset 1px 1px 0 #fff, inset -1px -1px 0 #808080;"></div>
<div style="position:absolute;left:501px;top:137px;width:342px;height:13px;background:linear-gradient(to right,#808080,#c0c0c0);"></div>
<div class="t n" style="left:502.5px;top:138.5px;font-size:8.2px;font-weight:bold;color:#dcd8d0;line-height:10px;">Properties</div>
<div style="position:absolute;left:831px;top:138px;width:11px;height:10px;background:#d4d0c8;border-top:1px solid #fff;border-left:1px solid #fff;border-right:1px solid #404040;border-bottom:1px solid #404040;"></div>
<svg style="position:absolute;left:833px;top:140px" width="7" height="6" viewBox="0 0 7 6"><path d="M0.8 0.6 L6.2 5.4 M6.2 0.6 L0.8 5.4" stroke="#000" stroke-width="1.4"/></svg>
<div class="t" style="left:509px;top:160.0px;font-size:10px;font-weight:bold;line-height:11px;transform:scaleX(0.94);-webkit-text-stroke:0;color:#0a0a0a;">Dump File:</div>
<div style="position:absolute;left:607px;top:158px;width:227px;height:14px;background:#fff;border-top:1px solid #8a8884;border-left:1px solid #8a8884;border-right:1px solid #fafafa;border-bottom:1px solid #fafafa;box-shadow:inset 1px 1px 0 #505050, inset -1px -1px 0 #dcdad6;"></div>
<div class="t" style="left:609.8px;top:160.0px;font-size:10px;font-weight:bold;line-height:11px;color:#10109a;transform:scaleX(0.99);-webkit-text-stroke:0;">032115-36020-01.dmp</div>
<div class="t" style="left:509px;top:176.8px;font-size:10px;font-weight:bold;line-height:11px;transform:scaleX(0.94);-webkit-text-stroke:0;color:#0a0a0a;">Crash Time:</div>
<div style="position:absolute;left:607px;top:175px;width:227px;height:14px;background:#fff;border-top:1px solid #8a8884;border-left:1px solid #8a8884;border-right:1px solid #fafafa;border-bottom:1px solid #fafafa;box-shadow:inset 1px 1px 0 #505050, inset -1px -1px 0 #dcdad6;"></div>
<div class="t" style="left:609.8px;top:176.8px;font-size:10px;font-weight:bold;line-height:11px;color:#10109a;transform:scaleX(0.99);-webkit-text-stroke:0;">21.03.2015 01:00:04</div>
<div class="t" style="left:509px;top:193.6px;font-size:10px;font-weight:bold;line-height:11px;transform:scaleX(0.94);-webkit-text-stroke:0;color:#0a0a0a;">Bug Check String:</div>
<div style="position:absolute;left:607px;top:192px;width:227px;height:14px;background:#fff;border-top:1px solid #8a8884;border-left:1px solid #8a8884;border-right:1px solid #fafafa;border-bottom:1px solid #fafafa;box-shadow:inset 1px 1px 0 #505050, inset -1px -1px 0 #dcdad6;"></div>
<div class="t" style="left:609.8px;top:193.6px;font-size:10px;font-weight:bold;line-height:11px;color:#10109a;transform:scaleX(0.952);-webkit-text-stroke:0;">MEMORY_MANAGEMENT</div>
<div class="t" style="left:509px;top:210.4px;font-size:10px;font-weight:bold;line-height:11px;transform:scaleX(0.94);-webkit-text-stroke:0;color:#0a0a0a;">Bug Check Code:</div>
<div style="position:absolute;left:607px;top:208px;width:227px;height:14px;background:#fff;border-top:1px solid #8a8884;border-left:1px solid #8a8884;border-right:1px solid #fafafa;border-bottom:1px solid #fafafa;box-shadow:inset 1px 1px 0 #505050, inset -1px -1px 0 #dcdad6;"></div>
<div class="t" style="left:609.8px;top:210.4px;font-size:10px;font-weight:bold;line-height:11px;color:#10109a;transform:scaleX(0.99);-webkit-text-stroke:0;">0x0000001a</div>
<div class="t" style="left:509px;top:227.2px;font-size:10px;font-weight:bold;line-height:11px;transform:scaleX(0.94);-webkit-text-stroke:0;color:#0a0a0a;">Parameter 1:</div>
<div style="position:absolute;left:607px;top:225px;width:227px;height:14px;background:#fff;border-top:1px solid #8a8884;border-left:1px solid #8a8884;border-right:1px solid #fafafa;border-bottom:1px solid #fafafa;box-shadow:inset 1px 1px 0 #505050, inset -1px -1px 0 #dcdad6;"></div>
<div class="t" style="left:609.8px;top:227.2px;font-size:10px;font-weight:bold;line-height:11px;color:#10109a;transform:scaleX(0.99);-webkit-text-stroke:0;">00000000`00041287</div>
<div class="t" style="left:509px;top:244.0px;font-size:10px;font-weight:bold;line-height:11px;transform:scaleX(0.94);-webkit-text-stroke:0;color:#0a0a0a;">Parameter 2:</div>
<div style="position:absolute;left:607px;top:242px;width:227px;height:14px;background:#fff;border-top:1px solid #8a8884;border-left:1px solid #8a8884;border-right:1px solid #fafafa;border-bottom:1px solid #fafafa;box-shadow:inset 1px 1px 0 #505050, inset -1px -1px 0 #dcdad6;"></div>
<div class="t" style="left:609.8px;top:244.0px;font-size:10px;font-weight:bold;line-height:11px;color:#10109a;transform:scaleX(0.99);-webkit-text-stroke:0;">00000000`0c21d800</div>
<div class="t" style="left:509px;top:260.8px;font-size:10px;font-weight:bold;line-height:11px;transform:scaleX(0.94);-webkit-text-stroke:0;color:#0a0a0a;">Parameter 3:</div>
<div style="position:absolute;left:607px;top:259px;width:227px;height:14px;background:#fff;border-top:1px solid #8a8884;border-left:1px solid #8a8884;border-right:1px solid #fafafa;border-bottom:1px solid #fafafa;box-shadow:inset 1px 1px 0 #505050, inset -1px -1px 0 #dcdad6;"></div>
<div class="t" style="left:609.8px;top:260.8px;font-size:10px;font-weight:bold;line-height:11px;color:#10109a;transform:scaleX(0.99);-webkit-text-stroke:0;">00000000`00000000</div>
<div class="t" style="left:509px;top:277.6px;font-size:10px;font-weight:bold;line-height:11px;transform:scaleX(0.94);-webkit-text-stroke:0;color:#0a0a0a;">Parameter 4:</div>
<div style="position:absolute;left:607px;top:276px;width:227px;height:14px;background:#fff;border-top:1px solid #8a8884;border-left:1px solid #8a8884;border-right:1px solid #fafafa;border-bottom:1px solid #fafafa;box-shadow:inset 1px 1px 0 #505050, inset -1px -1px 0 #dcdad6;"></div>
<div class="t" style="left:609.8px;top:277.6px;font-size:10px;font-weight:bold;line-height:11px;color:#10109a;transform:scaleX(0.99);-webkit-text-stroke:0;">00000000`00000000</div>
<div class="t" style="left:509px;top:294.4px;font-size:10px;font-weight:bold;line-height:11px;transform:scaleX(0.94);-webkit-text-stroke:0;color:#0a0a0a;">Caused By Driver:</div>
<div style="position:absolute;left:607px;top:292px;width:227px;height:14px;background:#fff;border-top:1px solid #8a8884;border-left:1px solid #8a8884;border-right:1px solid #fafafa;border-bottom:1px solid #fafafa;box-shadow:inset 1px 1px 0 #505050, inset -1px -1px 0 #dcdad6;"></div>
<div class="t" style="left:609.8px;top:294.4px;font-size:10px;font-weight:bold;line-height:11px;color:#10109a;transform:scaleX(0.955);-webkit-text-stroke:0;">ntoskrnl.exe</div>
<div class="t" style="left:509px;top:311.20000000000005px;font-size:10px;font-weight:bold;line-height:11px;transform:scaleX(0.94);-webkit-text-stroke:0;color:#0a0a0a;">Caused By Address:</div>
<div style="position:absolute;left:607px;top:309px;width:227px;height:14px;background:#fff;border-top:1px solid #8a8884;border-left:1px solid #8a8884;border-right:1px solid #fafafa;border-bottom:1px solid #fafafa;box-shadow:inset 1px 1px 0 #505050, inset -1px -1px 0 #dcdad6;"></div>
<div class="t" style="left:609.8px;top:311.20000000000005px;font-size:10px;font-weight:bold;line-height:11px;color:#10109a;transform:scaleX(0.955);-webkit-text-stroke:0;">ntoskrnl.exe+74ec0</div>
<div class="t" style="left:509px;top:328.0px;font-size:10px;font-weight:bold;line-height:11px;transform:scaleX(0.94);-webkit-text-stroke:0;color:#0a0a0a;">File Description:</div>
<div style="position:absolute;left:607px;top:326px;width:227px;height:14px;background:#fff;border-top:1px solid #8a8884;border-left:1px solid #8a8884;border-right:1px solid #fafafa;border-bottom:1px solid #fafafa;box-shadow:inset 1px 1px 0 #505050, inset -1px -1px 0 #dcdad6;"></div>
<div class="t" style="left:609.8px;top:328.0px;font-size:10px;font-weight:bold;line-height:11px;color:#10109a;transform:scaleX(0.955);-webkit-text-stroke:0;">NT Kernel &amp; System</div>
<div class="t" style="left:509px;top:344.8px;font-size:10px;font-weight:bold;line-height:11px;transform:scaleX(0.94);-webkit-text-stroke:0;color:#0a0a0a;">Product Name:</div>
<div style="position:absolute;left:607px;top:343px;width:227px;height:14px;background:#fff;border-top:1px solid #8a8884;border-left:1px solid #8a8884;border-right:1px solid #fafafa;border-bottom:1px solid #fafafa;box-shadow:inset 1px 1px 0 #505050, inset -1px -1px 0 #dcdad6;"></div>
<div class="t" style="left:609.8px;top:344.8px;font-size:10px;font-weight:bold;line-height:11px;color:#10109a;transform:scaleX(0.955);-webkit-text-stroke:0;">Microsoft&reg; Windows&reg; Operating System</div>
<div class="t" style="left:509px;top:361.6px;font-size:10px;font-weight:bold;line-height:11px;transform:scaleX(0.94);-webkit-text-stroke:0;color:#0a0a0a;">Company:</div>
<div style="position:absolute;left:607px;top:360px;width:227px;height:14px;background:#fff;border-top:1px solid #8a8884;border-left:1px solid #8a8884;border-right:1px solid #fafafa;border-bottom:1px solid #fafafa;box-shadow:inset 1px 1px 0 #505050, inset -1px -1px 0 #dcdad6;"></div>
<div class="t" style="left:609.8px;top:361.6px;font-size:10px;font-weight:bold;line-height:11px;color:#10109a;transform:scaleX(0.955);-webkit-text-stroke:0;">Microsoft Corporation</div>
<div class="t" style="left:509px;top:378.4px;font-size:10px;font-weight:bold;line-height:11px;transform:scaleX(0.94);-webkit-text-stroke:0;color:#0a0a0a;">File Version:</div>
<div style="position:absolute;left:607px;top:376px;width:227px;height:14px;background:#fff;border-top:1px solid #8a8884;border-left:1px solid #8a8884;border-right:1px solid #fafafa;border-bottom:1px solid #fafafa;box-shadow:inset 1px 1px 0 #505050, inset -1px -1px 0 #dcdad6;"></div>
<div class="t" style="left:609.8px;top:378.4px;font-size:10px;font-weight:bold;line-height:11px;color:#10109a;transform:scaleX(0.99);-webkit-text-stroke:0;">6.1.7601.18741 (win7sp1_gdr.150202-1526)</div>
<div class="t" style="left:509px;top:395.20000000000005px;font-size:10px;font-weight:bold;line-height:11px;transform:scaleX(0.94);-webkit-text-stroke:0;color:#0a0a0a;">Processor:</div>
<div style="position:absolute;left:607px;top:393px;width:227px;height:14px;background:#fff;border-top:1px solid #8a8884;border-left:1px solid #8a8884;border-right:1px solid #fafafa;border-bottom:1px solid #fafafa;box-shadow:inset 1px 1px 0 #505050, inset -1px -1px 0 #dcdad6;"></div>
<div class="t" style="left:609.8px;top:395.20000000000005px;font-size:10px;font-weight:bold;line-height:11px;color:#10109a;transform:scaleX(0.99);-webkit-text-stroke:0;">x64</div>
<div class="t" style="left:509px;top:412.0px;font-size:10px;font-weight:bold;line-height:11px;transform:scaleX(0.94);-webkit-text-stroke:0;color:#0a0a0a;">Crash Address:</div>
<div style="position:absolute;left:607px;top:410px;width:227px;height:14px;background:#fff;border-top:1px solid #8a8884;border-left:1px solid #8a8884;border-right:1px solid #fafafa;border-bottom:1px solid #fafafa;box-shadow:inset 1px 1px 0 #505050, inset -1px -1px 0 #dcdad6;"></div>
<div class="t" style="left:609.8px;top:412.0px;font-size:10px;font-weight:bold;line-height:11px;color:#10109a;transform:scaleX(0.955);-webkit-text-stroke:0;">ntoskrnl.exe+74ec0</div>
<div class="t" style="left:509px;top:428.8px;font-size:10px;font-weight:bold;line-height:11px;transform:scaleX(0.94);-webkit-text-stroke:0;color:#0a0a0a;">Stack Address 1:</div>
<div style="position:absolute;left:607px;top:427px;width:227px;height:14px;background:#fff;border-top:1px solid #8a8884;border-left:1px solid #8a8884;border-right:1px solid #fafafa;border-bottom:1px solid #fafafa;box-shadow:inset 1px 1px 0 #505050, inset -1px -1px 0 #dcdad6;"></div>
<div class="t" style="left:509px;top:445.6px;font-size:10px;font-weight:bold;line-height:11px;transform:scaleX(0.94);-webkit-text-stroke:0;color:#0a0a0a;">Stack Address 2:</div>
<div style="position:absolute;left:607px;top:444px;width:227px;height:14px;background:#fff;border-top:1px solid #8a8884;border-left:1px solid #8a8884;border-right:1px solid #fafafa;border-bottom:1px solid #fafafa;box-shadow:inset 1px 1px 0 #505050, inset -1px -1px 0 #dcdad6;"></div>
<div class="t" style="left:509px;top:462.40000000000003px;font-size:10px;font-weight:bold;line-height:11px;transform:scaleX(0.94);-webkit-text-stroke:0;color:#0a0a0a;">Stack Address 3:</div>
<div style="position:absolute;left:607px;top:460px;width:227px;height:14px;background:#fff;border-top:1px solid #8a8884;border-left:1px solid #8a8884;border-right:1px solid #fafafa;border-bottom:1px solid #fafafa;box-shadow:inset 1px 1px 0 #505050, inset -1px -1px 0 #dcdad6;"></div>
<div class="t" style="left:509px;top:479.2px;font-size:10px;font-weight:bold;line-height:11px;transform:scaleX(0.94);-webkit-text-stroke:0;color:#0a0a0a;">Computer Name:</div>
<div style="position:absolute;left:607px;top:477px;width:227px;height:14px;background:#fff;border-top:1px solid #8a8884;border-left:1px solid #8a8884;border-right:1px solid #fafafa;border-bottom:1px solid #fafafa;box-shadow:inset 1px 1px 0 #505050, inset -1px -1px 0 #dcdad6;"></div>
<div class="t" style="left:509px;top:496.0px;font-size:10px;font-weight:bold;line-height:11px;transform:scaleX(0.94);-webkit-text-stroke:0;color:#0a0a0a;">Full Path:</div>
<div style="position:absolute;left:607px;top:494px;width:227px;height:14px;background:#fff;border-top:1px solid #8a8884;border-left:1px solid #8a8884;border-right:1px solid #fafafa;border-bottom:1px solid #fafafa;box-shadow:inset 1px 1px 0 #505050, inset -1px -1px 0 #dcdad6;"></div>
<div class="t" style="left:609.8px;top:496.0px;font-size:10px;font-weight:bold;line-height:11px;color:#10109a;transform:scaleX(0.964);-webkit-text-stroke:0;">C:\Windows\Minidump\032115-36020-01.dmp</div>
<div class="t" style="left:509px;top:512.8px;font-size:10px;font-weight:bold;line-height:11px;transform:scaleX(0.94);-webkit-text-stroke:0;color:#0a0a0a;">Processors Count:</div>
<div style="position:absolute;left:607px;top:511px;width:227px;height:14px;background:#fff;border-top:1px solid #8a8884;border-left:1px solid #8a8884;border-right:1px solid #fafafa;border-bottom:1px solid #fafafa;box-shadow:inset 1px 1px 0 #505050, inset -1px -1px 0 #dcdad6;"></div>
<div class="t" style="left:609.8px;top:512.8px;font-size:10px;font-weight:bold;line-height:11px;color:#10109a;transform:scaleX(0.99);-webkit-text-stroke:0;">8</div>
<div class="t" style="left:509px;top:529.6px;font-size:10px;font-weight:bold;line-height:11px;transform:scaleX(0.94);-webkit-text-stroke:0;color:#0a0a0a;">Major Version:</div>
<div style="position:absolute;left:607px;top:528px;width:227px;height:14px;background:#fff;border-top:1px solid #8a8884;border-left:1px solid #8a8884;border-right:1px solid #fafafa;border-bottom:1px solid #fafafa;box-shadow:inset 1px 1px 0 #505050, inset -1px -1px 0 #dcdad6;"></div>
<div class="t" style="left:609.8px;top:529.6px;font-size:10px;font-weight:bold;line-height:11px;color:#10109a;transform:scaleX(0.99);-webkit-text-stroke:0;">15</div>
<div class="t" style="left:509px;top:546.4000000000001px;font-size:10px;font-weight:bold;line-height:11px;transform:scaleX(0.94);-webkit-text-stroke:0;color:#0a0a0a;">Minor Version:</div>
<div style="position:absolute;left:607px;top:544px;width:227px;height:14px;background:#fff;border-top:1px solid #8a8884;border-left:1px solid #8a8884;border-right:1px solid #fafafa;border-bottom:1px solid #fafafa;box-shadow:inset 1px 1px 0 #505050, inset -1px -1px 0 #dcdad6;"></div>
<div class="t" style="left:609.8px;top:546.4000000000001px;font-size:10px;font-weight:bold;line-height:11px;color:#10109a;transform:scaleX(0.99);-webkit-text-stroke:0;">7601</div>
<div class="t" style="left:509px;top:563.2px;font-size:10px;font-weight:bold;line-height:11px;transform:scaleX(0.94);-webkit-text-stroke:0;color:#0a0a0a;">Dump File Size:</div>
<div style="position:absolute;left:607px;top:561px;width:227px;height:14px;background:#fff;border-top:1px solid #8a8884;border-left:1px solid #8a8884;border-right:1px solid #fafafa;border-bottom:1px solid #fafafa;box-shadow:inset 1px 1px 0 #505050, inset -1px -1px 0 #dcdad6;"></div>
<div class="t" style="left:609.8px;top:563.2px;font-size:10px;font-weight:bold;line-height:11px;color:#10109a;transform:scaleX(0.99);-webkit-text-stroke:0;">285.864</div>
<div class="t" style="left:509px;top:580.0px;font-size:10px;font-weight:bold;line-height:11px;transform:scaleX(0.94);-webkit-text-stroke:0;color:#0a0a0a;">Dump File Time:</div>
<div style="position:absolute;left:607px;top:578px;width:227px;height:14px;background:#fff;border-top:1px solid #8a8884;border-left:1px solid #8a8884;border-right:1px solid #fafafa;border-bottom:1px solid #fafafa;box-shadow:inset 1px 1px 0 #505050, inset -1px -1px 0 #dcdad6;"></div>
<div class="t" style="left:609.8px;top:580.0px;font-size:10px;font-weight:bold;line-height:11px;color:#10109a;transform:scaleX(0.99);-webkit-text-stroke:0;">21.03.2015 01:01:09</div>
<div style="position:absolute;left:782px;top:598px;width:53px;height:17px;background:#d4d0c8;border-top:1px solid #fff;border-left:1px solid #fff;border-right:1px solid #404040;border-bottom:1px solid #404040;box-shadow:inset -1px -1px 0 #808080;"></div>
<div class="t n" style="left:802.5px;top:601.5px;font-size:9px;line-height:11px;letter-spacing:-0.4px;">OK</div>
<svg style="position:absolute;left:1248.5px;top:628.8px" width="10" height="15" viewBox="0 0 10 15"><path d="M0.7 0.7 L0.7 10.6 L2.9 8.5 L4.9 13.2 L6.8 12.4 L4.9 7.9 L8 7.9 Z" fill="#fff" stroke="#000" stroke-width="1" stroke-linejoin="miter"/></svg>
</body></html>
